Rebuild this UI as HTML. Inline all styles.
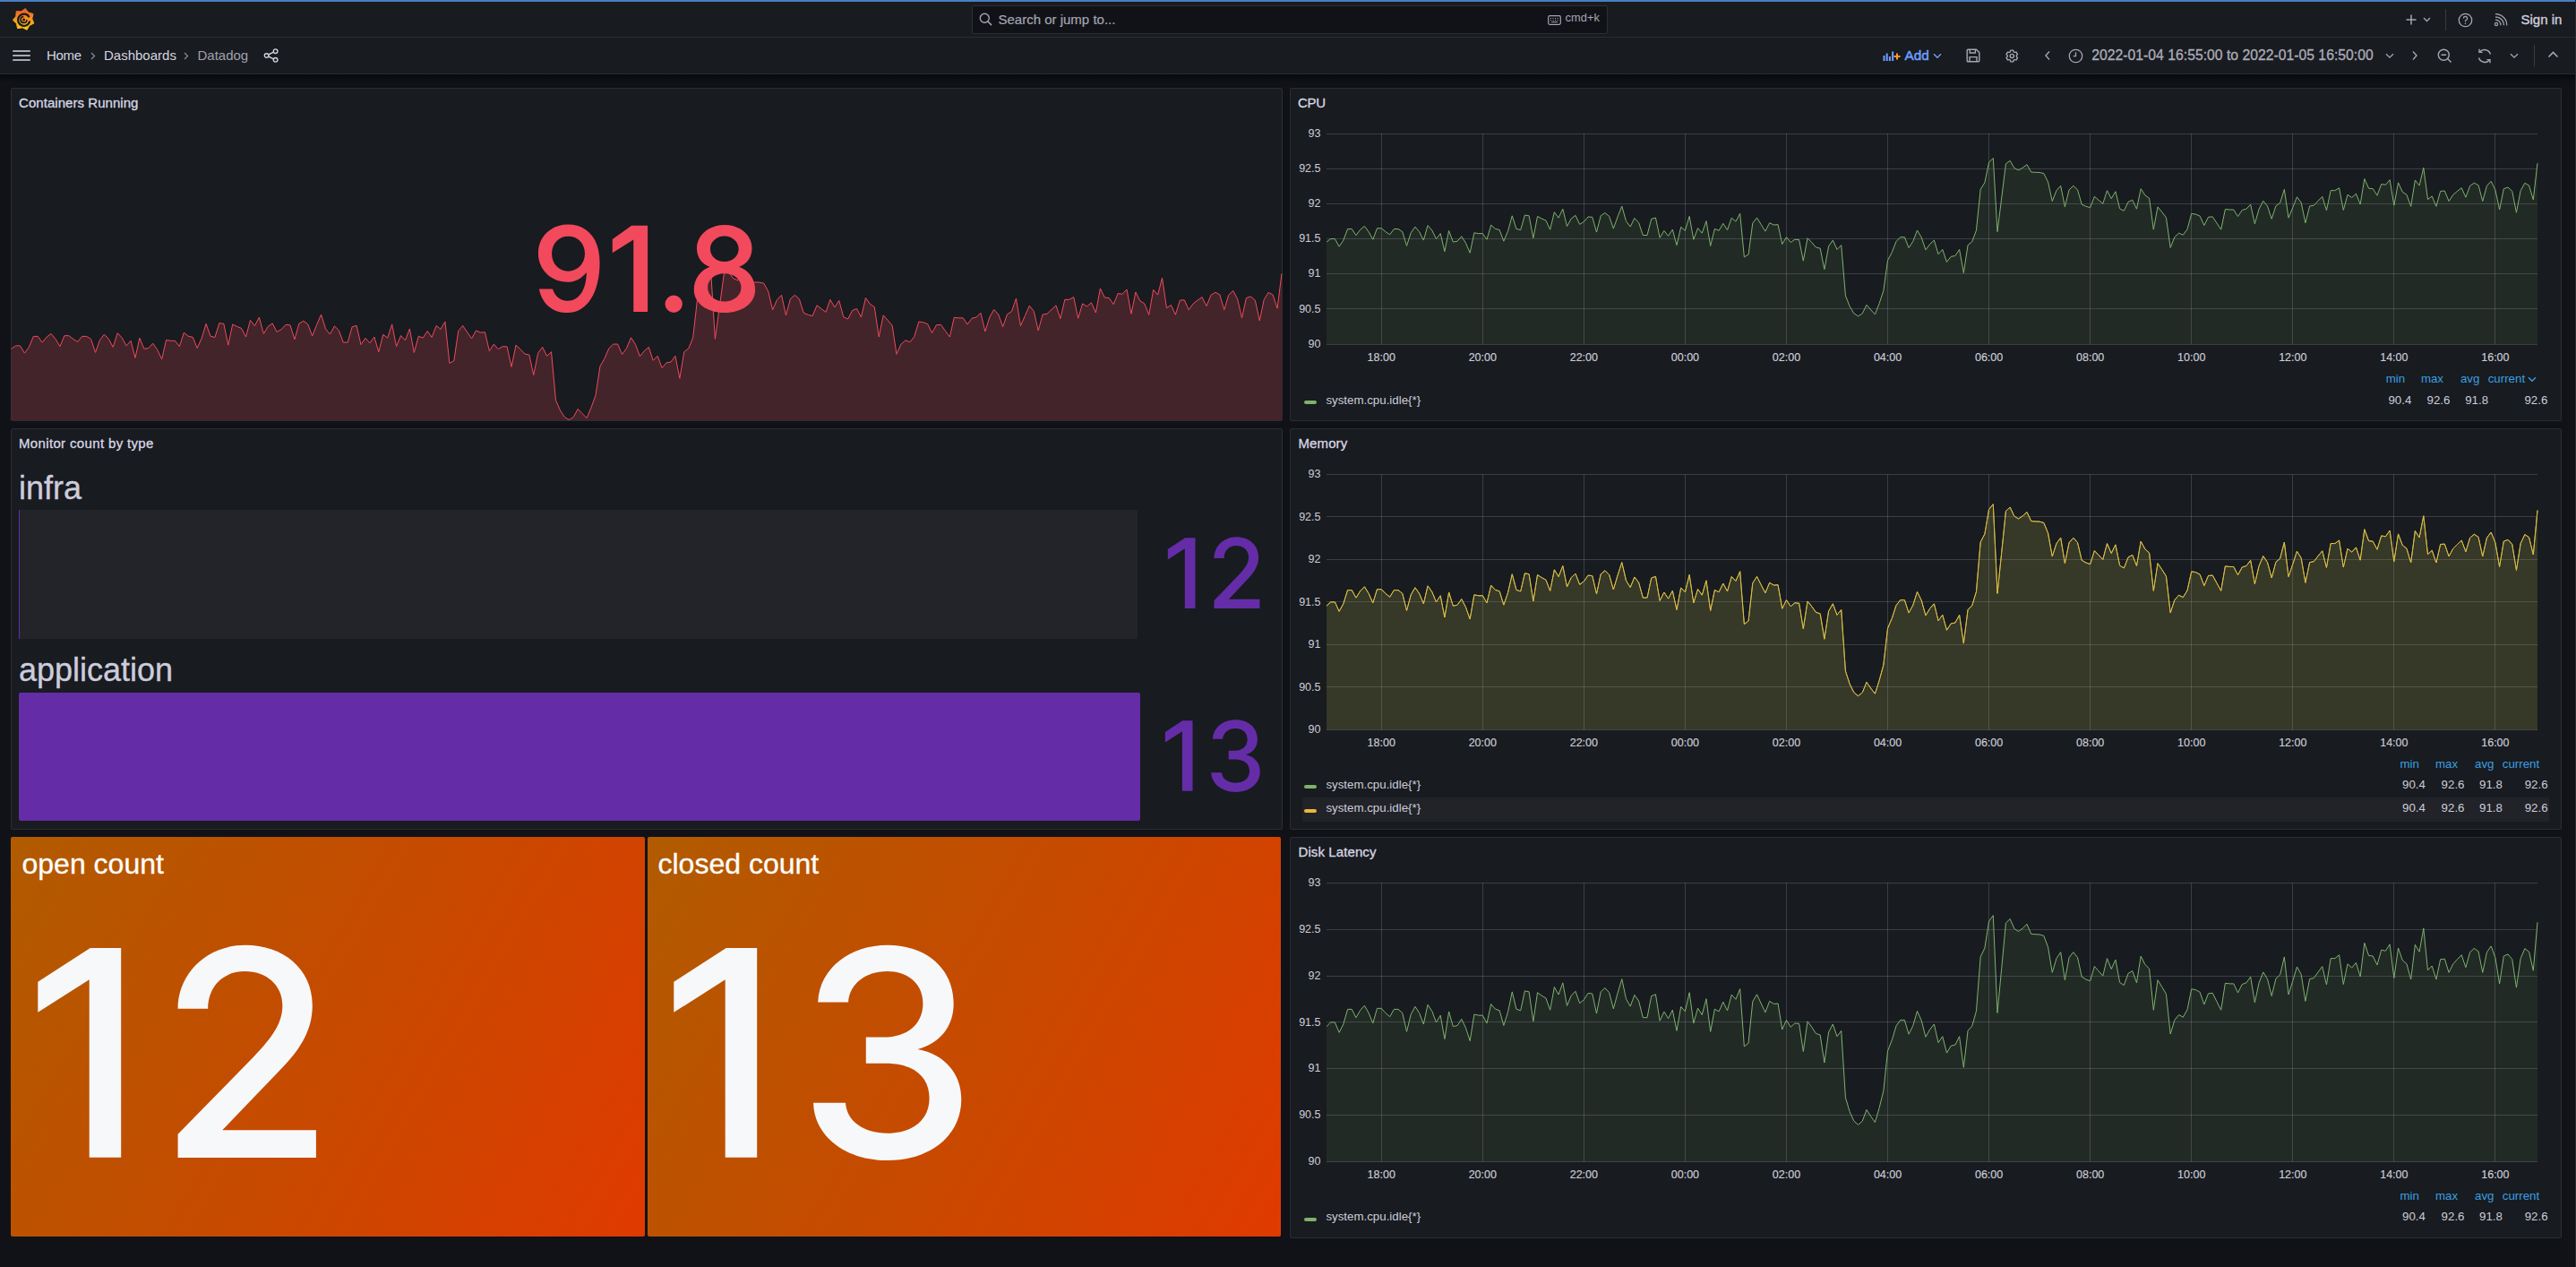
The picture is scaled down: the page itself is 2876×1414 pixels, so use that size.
<!DOCTYPE html>
<html><head><meta charset="utf-8"><style>
html,body{margin:0;padding:0;width:2876px;height:1414px;overflow:hidden;background:#111217;font-family:"Liberation Sans", sans-serif;}
.a{position:absolute;}
.t{position:absolute;line-height:1;white-space:nowrap;font-family:"Liberation Sans", sans-serif;}
</style></head><body>
<div class="a" style="left:0px;top:0px;width:2876px;height:41px;background:#181b1f;"></div>
<div class="a" style="left:0px;top:0px;width:2876px;height:2px;background:#4a7fc0;"></div>
<div class="a" style="left:0px;top:41px;width:2876px;height:1px;background:#2a2c31;"></div>
<div class="a" style="left:0px;top:42px;width:2876px;height:40px;background:#181b1f;"></div>
<div class="a" style="left:0px;top:82px;width:2876px;height:1px;background:#2a2c31;"></div>
<div class="a" style="left:0px;top:83px;width:2876px;height:9px;background:linear-gradient(#08090c,rgba(17,18,23,0));"></div>
<svg class="a" style="left:13px;top:9px" width="27" height="26" viewBox="0 0 27 26">
<defs><linearGradient id="lg" x1="0" y1="0" x2="0" y2="1"><stop offset="0" stop-color="#f05a28"/><stop offset="0.5" stop-color="#f7931e"/><stop offset="1" stop-color="#fbca0a"/></linearGradient></defs>
<path fill="url(#lg)" stroke="url(#lg)" stroke-width="1" stroke-linejoin="round" d="M15.32,0.54 L18.74,4.92 L24.07,6.50 L22.77,11.91 L24.85,17.06 L19.82,19.42 L17.09,24.26 L12.11,21.80 L6.62,22.68 L5.44,17.25 L1.33,13.51 L4.84,9.20 L5.21,3.65 L10.76,3.71 Z"/>
<path fill="none" stroke="#181b1f" stroke-width="2.2" d="M19.6 10.2 A6.6 6.6 0 1 0 20.2 14.5"/>
<path fill="none" stroke="#181b1f" stroke-width="1.6" d="M13.3 9.6 A3.4 3.4 0 1 0 16.9 12.9"/>
<circle cx="13.6" cy="13" r="1.5" fill="#181b1f"/>
</svg>
<div class="a" style="left:1085px;top:6px;width:710px;height:32px;background:#111217;border:1px solid #2d2f35;border-radius:2px;box-sizing:border-box;"></div>
<svg class="a" style="left:1093px;top:14px" width="15" height="15" viewBox="0 0 15 15"><circle cx="6.3" cy="6.3" r="5" fill="none" stroke="#a5a5b3" stroke-width="1.4"/><path d="M10 10 L13.6 13.6" stroke="#a5a5b3" stroke-width="1.5" stroke-linecap="round"/></svg>
<div class="t" style="left:1114.50px;top:14.20px;font-size:15px;color:#a5a5b3;-webkit-text-stroke:0.2px #a5a5b3;">Search or jump to...</div>
<svg class="a" style="left:1727.5px;top:16.5px" width="15" height="11" viewBox="0 0 15 11"><rect x="0.7" y="0.7" width="13.6" height="9.6" rx="1.5" fill="none" stroke="#a5a5b3" stroke-width="1.2"/><path d="M3 3.5h1M5.5 3.5h1M8 3.5h1M10.5 3.5h1M3 5.5h1M5.5 5.5h1M8 5.5h1M10.5 5.5h1M4 7.6h7" stroke="#a5a5b3" stroke-width="1"/></svg>
<div class="t" style="left:1747.50px;top:14.36px;font-size:12.8px;color:#a5a5b3;letter-spacing:0.1px;">cmd+k</div>
<svg class="a" style="left:2685px;top:15px" width="14" height="14" viewBox="0 0 14 14"><path d="M7 1.5v11M1.5 7h11" stroke="#a5a5b3" stroke-width="1.5"/></svg>
<svg class="a" style="left:2705px;top:19px" width="9" height="6" viewBox="0 0 9 6"><path d="M1 1l3.5 3.5L8 1" fill="none" stroke="#a5a5b3" stroke-width="1.3"/></svg>
<div class="a" style="left:2730px;top:10px;width:1px;height:24px;background:#3a3c42;"></div>
<svg class="a" style="left:2744px;top:14px" width="17" height="17" viewBox="0 0 17 17"><circle cx="8.5" cy="8.5" r="7.2" fill="none" stroke="#a5a5b3" stroke-width="1.3"/><path d="M6.4 6.6a2.1 2.1 0 1 1 2.9 1.9c-.6.3-.8.7-.8 1.3v.5" fill="none" stroke="#a5a5b3" stroke-width="1.3"/><circle cx="8.5" cy="12.3" r=".8" fill="#a5a5b3"/></svg>
<svg class="a" style="left:2784px;top:15px" width="16" height="15" viewBox="0 0 16 15"><circle cx="3" cy="12" r="1.6" fill="none" stroke="#a5a5b3" stroke-width="1.2"/><path d="M2 7.2a5.8 5.8 0 0 1 6 6M2 3.8a9.3 9.3 0 0 1 9.5 9.5M2 .6a12.6 12.6 0 0 1 12.8 12.8" fill="none" stroke="#a5a5b3" stroke-width="1.2"/></svg>
<div class="t" style="left:2814.50px;top:14.10px;font-size:15px;color:#ccccdc;-webkit-text-stroke:0.4px #ccccdc;">Sign in</div>
<svg class="a" style="left:14px;top:55px" width="20" height="14" viewBox="0 0 20 14"><path d="M0.2 2h19.6M0.2 7h19.6M0.2 12h19.6" stroke="#d8d8e6" stroke-width="1.6"/></svg>
<div class="t" style="left:52.00px;top:54.30px;font-size:15px;color:#d4d4e0;letter-spacing:-0.3px;">Home</div>
<svg class="a" style="left:101px;top:58px" width="6" height="9" viewBox="0 0 6 9"><path d="M1 1l3.5 3.5L1 8" fill="none" stroke="#8e8e9b" stroke-width="1.2"/></svg>
<div class="t" style="left:116.00px;top:54.30px;font-size:15px;color:#d4d4e0;">Dashboards</div>
<svg class="a" style="left:205px;top:58px" width="6" height="9" viewBox="0 0 6 9"><path d="M1 1l3.5 3.5L1 8" fill="none" stroke="#8e8e9b" stroke-width="1.2"/></svg>
<div class="t" style="left:220.50px;top:54.30px;font-size:15px;color:#a0a0ad;">Datadog</div>
<svg class="a" style="left:294px;top:54px" width="18" height="16" viewBox="0 0 18 16"><circle cx="13.6" cy="3.2" r="2.3" fill="none" stroke="#d0d0dc" stroke-width="1.4"/><circle cx="3.6" cy="8" r="2.3" fill="none" stroke="#d0d0dc" stroke-width="1.4"/><circle cx="13.6" cy="12.8" r="2.3" fill="none" stroke="#d0d0dc" stroke-width="1.4"/><path d="M5.7 7l5.8-2.8M5.7 9l5.8 2.8" stroke="#d0d0dc" stroke-width="1.4"/></svg>
<svg class="a" style="left:2102px;top:55px" width="21" height="14" viewBox="0 0 21 14"><path d="M1.5 13V7M4.7 13V4.5M7.9 13V8M11.1 13V2.5" stroke="#6e9fff" stroke-width="2"/><path d="M16 4.5v7M12.5 8h7" stroke="#ff9830" stroke-width="2"/></svg>
<div class="t" style="left:2126.50px;top:53.95px;font-size:15.3px;color:#6e9fff;-webkit-text-stroke:0.5px #6e9fff;">Add</div>
<svg class="a" style="left:2158px;top:59px" width="10" height="7" viewBox="0 0 10 7"><path d="M1 1.2l4 4 4-4" fill="none" stroke="#6e9fff" stroke-width="1.4"/></svg>
<svg class="a" style="left:2195px;top:54px" width="16" height="16" viewBox="0 0 16 16"><path d="M1.2 2.2a1 1 0 0 1 1-1h9.3l3.3 3.3v9.3a1 1 0 0 1-1 1H2.2a1 1 0 0 1-1-1z" fill="none" stroke="#a5a5b3" stroke-width="1.4"/><path d="M4.2 1.4v3.6h6.2V1.4M4 14.6V9.6h8v5" fill="none" stroke="#a5a5b3" stroke-width="1.4"/></svg>
<svg class="a" style="left:2238px;top:54px" width="17" height="17" viewBox="0 0 24 24"><path fill="#a5a5b3" d="M19.9 12.66a1 1 0 0 1 0-1.32l1.28-1.44a1 1 0 0 0 .12-1.17l-2-3.46a1 1 0 0 0-1.07-.48l-1.88.38a1 1 0 0 1-1.15-.66l-.61-1.83a1 1 0 0 0-.95-.68h-4a1 1 0 0 0-1 .68l-.56 1.83a1 1 0 0 1-1.15.66L5 4.79a1 1 0 0 0-1 .48L2 8.73a1 1 0 0 0 .1 1.17l1.27 1.44a1 1 0 0 1 0 1.32L2.1 14.1a1 1 0 0 0-.1 1.17l2 3.46a1 1 0 0 0 1.07.48l1.88-.38a1 1 0 0 1 1.15.66l.61 1.83a1 1 0 0 0 1 .68h4a1 1 0 0 0 .95-.68l.61-1.83a1 1 0 0 1 1.15-.66l1.88.38a1 1 0 0 0 1.07-.48l2-3.46a1 1 0 0 0-.12-1.17ZM18.41 14l.8.9-1.28 2.22-1.18-.24a3 3 0 0 0-3.45 2L12.92 20h-2.56L10 18.86a3 3 0 0 0-3.45-2l-1.18.24-1.3-2.21.8-.9a3 3 0 0 0 0-4l-.8-.9 1.28-2.2 1.18.24a3 3 0 0 0 3.45-2L10.36 4h2.56l.38 1.14a3 3 0 0 0 3.45 2l1.18-.24 1.28 2.22-.8.9a3 3 0 0 0 0 3.98Zm-6.77-6a4 4 0 1 0 4 4 4 4 0 0 0-4-4Zm0 6a2 2 0 1 1 2-2 2 2 0 0 1-2 2Z"/></svg>
<svg class="a" style="left:2282px;top:56px" width="8" height="12" viewBox="0 0 8 12"><path d="M6 1.5L2 6l4 4.5" fill="none" stroke="#a5a5b3" stroke-width="1.4"/></svg>
<svg class="a" style="left:2309px;top:54px" width="17" height="17" viewBox="0 0 17 17"><circle cx="8.5" cy="8.5" r="7.2" fill="none" stroke="#a5a5b3" stroke-width="1.3"/><path d="M8.5 4.3v4.4H5.8" fill="none" stroke="#a5a5b3" stroke-width="1.3"/></svg>
<div class="t" style="left:2335.30px;top:53.96px;font-size:15.75px;color:#acacba;-webkit-text-stroke:0.3px #acacba;">2022-01-04 16:55:00 to 2022-01-05 16:50:00</div>
<svg class="a" style="left:2663px;top:59px" width="10" height="7" viewBox="0 0 10 7"><path d="M1 1.2l4 4 4-4" fill="none" stroke="#a5a5b3" stroke-width="1.3"/></svg>
<svg class="a" style="left:2692px;top:56px" width="8" height="12" viewBox="0 0 8 12"><path d="M2 1.5L6 6l-4 4.5" fill="none" stroke="#a5a5b3" stroke-width="1.4"/></svg>
<svg class="a" style="left:2721px;top:54px" width="17" height="17" viewBox="0 0 17 17"><circle cx="7.3" cy="7.3" r="6" fill="none" stroke="#a5a5b3" stroke-width="1.4"/><path d="M4.5 7.3h5.6M11.6 11.6l4 4" stroke="#a5a5b3" stroke-width="1.4"/></svg>
<svg class="a" style="left:2765px;top:54px" width="18" height="17" viewBox="0 0 18 17"><path d="M15.5 6.5A7 7 0 0 0 3.5 4M2.5 10.5A7 7 0 0 0 14.5 13" fill="none" stroke="#a5a5b3" stroke-width="1.4"/><path d="M3 0.8v3.6h3.6M15 16.2v-3.6h-3.6" fill="none" stroke="#a5a5b3" stroke-width="1.4"/></svg>
<svg class="a" style="left:2802px;top:59px" width="10" height="7" viewBox="0 0 10 7"><path d="M1 1.2l4 4 4-4" fill="none" stroke="#a5a5b3" stroke-width="1.3"/></svg>
<div class="a" style="left:2829px;top:50px;width:1px;height:24px;background:#3a3c42;"></div>
<svg class="a" style="left:2844px;top:56px" width="13" height="9" viewBox="0 0 13 9"><path d="M1.5 7.5l5-5 5 5" fill="none" stroke="#a5a5b3" stroke-width="1.6"/></svg>
<div class="a" style="left:2875px;top:0px;width:1px;height:1414px;background:#2a2c31;"></div>
<div class="a" style="left:12px;top:98px;width:1420px;height:372px;background:#181b1f;border:1px solid #2b2d32;box-sizing:border-box;border-radius:2px;"></div>
<div class="a" style="left:1440px;top:98px;width:1420px;height:372px;background:#181b1f;border:1px solid #2b2d32;box-sizing:border-box;border-radius:2px;"></div>
<div class="a" style="left:12px;top:478px;width:1420px;height:448px;background:#181b1f;border:1px solid #2b2d32;box-sizing:border-box;border-radius:2px;"></div>
<div class="a" style="left:1440px;top:478px;width:1420px;height:448px;background:#181b1f;border:1px solid #2b2d32;box-sizing:border-box;border-radius:2px;"></div>
<div class="a" style="left:12px;top:934px;width:1420px;height:447px;background:#111217;box-sizing:border-box;border-radius:2px;"></div>
<div class="a" style="left:1440px;top:934px;width:1420px;height:448px;background:#181b1f;border:1px solid #2b2d32;box-sizing:border-box;border-radius:2px;"></div>
<div class="t" style="left:21.00px;top:107.20px;font-size:15px;color:#d8d8e6;-webkit-text-stroke:0.3px #d8d8e6;letter-spacing:0.05px;">Containers Running</div>
<div class="t" style="left:1449.00px;top:107.20px;font-size:15px;color:#d8d8e6;-webkit-text-stroke:0.3px #d8d8e6;letter-spacing:-0.3px;">CPU</div>
<div class="t" style="left:21.00px;top:487.20px;font-size:15px;color:#d8d8e6;-webkit-text-stroke:0.3px #d8d8e6;letter-spacing:0.35px;">Monitor count by type</div>
<div class="t" style="left:1449.50px;top:487.20px;font-size:15px;color:#d8d8e6;-webkit-text-stroke:0.3px #d8d8e6;letter-spacing:0.1px;">Memory</div>
<div class="t" style="left:1449.50px;top:943.20px;font-size:15px;color:#d8d8e6;-webkit-text-stroke:0.3px #d8d8e6;letter-spacing:0.1px;">Disk Latency</div>
<svg class="a" style="left:0;top:0" width="2876" height="1414"><path d="M1481.0 149.5H2833.0" stroke="rgba(204,204,220,0.2)" stroke-width="1"/><path d="M1481.0 188.5H2833.0" stroke="rgba(204,204,220,0.2)" stroke-width="1"/><path d="M1481.0 227.5H2833.0" stroke="rgba(204,204,220,0.2)" stroke-width="1"/><path d="M1481.0 266.5H2833.0" stroke="rgba(204,204,220,0.2)" stroke-width="1"/><path d="M1481.0 305.5H2833.0" stroke="rgba(204,204,220,0.2)" stroke-width="1"/><path d="M1481.0 344.5H2833.0" stroke="rgba(204,204,220,0.2)" stroke-width="1"/><path d="M1481.0 384.5H2833.0" stroke="rgba(204,204,220,0.2)" stroke-width="1"/><path d="M1542.5 149V384" stroke="rgba(204,204,220,0.2)" stroke-width="1"/><path d="M1655.5 149V384" stroke="rgba(204,204,220,0.2)" stroke-width="1"/><path d="M1768.5 149V384" stroke="rgba(204,204,220,0.2)" stroke-width="1"/><path d="M1881.5 149V384" stroke="rgba(204,204,220,0.2)" stroke-width="1"/><path d="M1994.5 149V384" stroke="rgba(204,204,220,0.2)" stroke-width="1"/><path d="M2107.5 149V384" stroke="rgba(204,204,220,0.2)" stroke-width="1"/><path d="M2220.5 149V384" stroke="rgba(204,204,220,0.2)" stroke-width="1"/><path d="M2333.5 149V384" stroke="rgba(204,204,220,0.2)" stroke-width="1"/><path d="M2446.5 149V384" stroke="rgba(204,204,220,0.2)" stroke-width="1"/><path d="M2559.5 149V384" stroke="rgba(204,204,220,0.2)" stroke-width="1"/><path d="M2672.5 149V384" stroke="rgba(204,204,220,0.2)" stroke-width="1"/><path d="M2785.5 149V384" stroke="rgba(204,204,220,0.2)" stroke-width="1"/><path d="M1481.0,384 L1481.00,270.03 1485.71,266.50 1490.42,266.50 1495.13,275.12 1499.84,268.07 1504.55,255.53 1509.26,255.53 1513.98,262.58 1518.69,256.32 1523.40,252.40 1528.11,258.67 1532.82,267.28 1537.53,254.75 1542.24,254.75 1546.95,258.67 1551.66,261.80 1556.37,255.53 1561.08,255.53 1565.79,258.67 1570.51,274.33 1575.22,259.84 1579.93,253.18 1584.64,258.67 1589.35,268.07 1594.06,251.62 1598.77,257.10 1603.48,266.50 1608.19,260.62 1612.90,280.60 1617.61,257.49 1622.32,270.03 1627.03,269.24 1631.75,263.76 1636.46,271.20 1641.17,282.17 1645.88,259.84 1650.59,260.62 1655.30,260.62 1660.01,267.28 1664.72,251.15 1669.43,255.38 1674.14,256.47 1678.85,269.16 1683.56,257.80 1688.28,240.81 1692.99,255.38 1697.70,256.63 1702.41,240.02 1707.12,240.81 1711.83,265.72 1716.54,241.43 1721.25,244.02 1725.96,246.13 1730.67,256.16 1735.38,236.73 1740.09,243.16 1744.80,233.21 1749.52,252.56 1754.23,244.02 1758.94,240.34 1763.65,250.36 1768.36,247.47 1773.07,241.90 1777.78,242.37 1782.49,259.06 1787.20,240.81 1791.91,237.52 1796.62,241.43 1801.33,255.06 1806.05,241.90 1810.76,230.00 1815.47,246.68 1820.18,253.03 1824.89,243.47 1829.60,248.56 1834.31,262.50 1839.02,262.50 1843.73,244.33 1848.44,243.00 1853.15,265.25 1857.86,257.49 1862.57,263.37 1867.29,256.16 1872.00,273.63 1876.71,253.34 1881.42,257.33 1886.13,241.43 1890.84,267.28 1895.55,254.59 1900.26,260.15 1904.97,246.68 1909.68,274.41 1914.39,255.38 1919.10,257.33 1923.82,249.35 1928.53,256.63 1933.24,243.16 1937.95,247.15 1942.66,238.30 1947.37,286.87 1952.08,283.97 1956.79,249.03 1961.50,243.00 1966.21,250.68 1970.92,258.12 1975.63,248.72 1980.34,250.99 1985.06,250.68 1989.77,272.53 1994.48,264.62 1999.19,270.50 2003.90,267.28 2008.61,267.60 2013.32,291.10 2018.03,265.72 2022.74,270.50 2027.45,275.98 2032.16,277.15 2036.87,300.58 2041.59,274.88 2046.30,268.07 2051.01,278.41 2055.72,273.63 2060.43,329.95 2065.14,341.86 2069.85,349.77 2074.56,352.90 2079.27,349.77 2083.98,340.21 2088.69,345.77 2093.40,350.86 2098.11,338.65 2102.83,324.39 2107.54,290.63 2112.25,281.54 2116.96,269.63 2121.67,264.62 2126.38,264.62 2131.09,276.53 2135.80,269.32 2140.51,257.02 2145.22,264.93 2149.93,278.88 2154.64,272.53 2159.36,268.07 2164.07,283.65 2168.78,278.41 2173.49,292.35 2178.20,286.32 2182.91,285.53 2187.62,278.41 2192.33,304.57 2197.04,273.63 2201.75,269.63 2206.46,257.02 2211.17,211.35 2215.89,203.83 2220.60,181.20 2225.31,176.42 2230.02,258.59 2234.73,220.83 2239.44,182.76 2244.15,179.32 2248.86,187.54 2253.57,189.89 2258.28,187.23 2262.99,183.70 2267.70,192.01 2272.41,192.32 2277.13,192.48 2281.84,193.57 2286.55,203.05 2291.26,224.51 2295.97,212.61 2300.68,207.36 2305.39,230.86 2310.10,211.82 2314.81,207.36 2319.52,211.82 2324.23,228.12 2328.94,230.31 2333.66,231.64 2338.37,219.27 2343.08,223.34 2347.79,227.33 2352.50,212.61 2357.21,221.62 2361.92,213.70 2366.63,232.89 2371.34,235.24 2376.05,225.30 2380.76,223.18 2385.47,233.21 2390.18,210.65 2394.90,217.86 2399.61,221.30 2404.32,256.16 2409.03,230.86 2413.74,236.65 2418.45,242.69 2423.16,276.37 2427.87,264.62 2432.58,260.15 2437.29,262.19 2442.00,255.85 2446.71,238.46 2451.43,239.08 2456.14,241.12 2460.85,251.46 2465.56,242.22 2470.27,241.90 2474.98,249.03 2479.69,256.16 2484.40,233.52 2489.11,233.99 2493.82,233.99 2498.53,241.59 2503.24,234.46 2507.95,233.21 2512.67,228.12 2517.38,249.82 2522.09,233.21 2526.80,224.20 2531.51,230.00 2536.22,244.33 2540.93,229.68 2545.64,226.39 2550.35,211.35 2555.06,243.16 2559.77,231.64 2564.48,219.74 2569.20,226.08 2573.91,248.72 2578.62,230.00 2583.33,229.21 2588.04,224.20 2592.75,219.42 2597.46,234.77 2602.17,212.61 2606.88,212.61 2611.59,209.71 2616.30,234.46 2621.01,217.31 2625.72,220.52 2630.44,216.21 2635.15,227.96 2639.86,199.60 2644.57,210.18 2649.28,210.65 2653.99,218.17 2658.70,205.48 2663.41,206.26 2668.12,200.70 2672.83,229.21 2677.54,203.83 2682.25,214.17 2686.97,217.31 2691.68,230.31 2696.39,201.01 2701.10,207.04 2705.81,187.23 2710.52,222.55 2715.23,218.95 2719.94,230.31 2724.65,213.39 2729.36,213.08 2734.07,224.51 2738.78,217.31 2743.49,213.39 2748.21,209.71 2752.92,220.21 2757.63,207.36 2762.34,204.15 2767.05,206.73 2771.76,224.51 2776.47,207.36 2781.18,202.27 2785.89,211.82 2790.60,233.99 2795.31,210.65 2800.02,209.08 2804.74,213.39 2809.45,237.20 2814.16,212.61 2818.87,204.30 2823.58,207.04 2828.29,222.87 2833.00,182.14 L2833.0,384 Z" fill="rgba(126,178,109,0.1)" /><polyline points="1481.00,270.03 1485.71,266.50 1490.42,266.50 1495.13,275.12 1499.84,268.07 1504.55,255.53 1509.26,255.53 1513.98,262.58 1518.69,256.32 1523.40,252.40 1528.11,258.67 1532.82,267.28 1537.53,254.75 1542.24,254.75 1546.95,258.67 1551.66,261.80 1556.37,255.53 1561.08,255.53 1565.79,258.67 1570.51,274.33 1575.22,259.84 1579.93,253.18 1584.64,258.67 1589.35,268.07 1594.06,251.62 1598.77,257.10 1603.48,266.50 1608.19,260.62 1612.90,280.60 1617.61,257.49 1622.32,270.03 1627.03,269.24 1631.75,263.76 1636.46,271.20 1641.17,282.17 1645.88,259.84 1650.59,260.62 1655.30,260.62 1660.01,267.28 1664.72,251.15 1669.43,255.38 1674.14,256.47 1678.85,269.16 1683.56,257.80 1688.28,240.81 1692.99,255.38 1697.70,256.63 1702.41,240.02 1707.12,240.81 1711.83,265.72 1716.54,241.43 1721.25,244.02 1725.96,246.13 1730.67,256.16 1735.38,236.73 1740.09,243.16 1744.80,233.21 1749.52,252.56 1754.23,244.02 1758.94,240.34 1763.65,250.36 1768.36,247.47 1773.07,241.90 1777.78,242.37 1782.49,259.06 1787.20,240.81 1791.91,237.52 1796.62,241.43 1801.33,255.06 1806.05,241.90 1810.76,230.00 1815.47,246.68 1820.18,253.03 1824.89,243.47 1829.60,248.56 1834.31,262.50 1839.02,262.50 1843.73,244.33 1848.44,243.00 1853.15,265.25 1857.86,257.49 1862.57,263.37 1867.29,256.16 1872.00,273.63 1876.71,253.34 1881.42,257.33 1886.13,241.43 1890.84,267.28 1895.55,254.59 1900.26,260.15 1904.97,246.68 1909.68,274.41 1914.39,255.38 1919.10,257.33 1923.82,249.35 1928.53,256.63 1933.24,243.16 1937.95,247.15 1942.66,238.30 1947.37,286.87 1952.08,283.97 1956.79,249.03 1961.50,243.00 1966.21,250.68 1970.92,258.12 1975.63,248.72 1980.34,250.99 1985.06,250.68 1989.77,272.53 1994.48,264.62 1999.19,270.50 2003.90,267.28 2008.61,267.60 2013.32,291.10 2018.03,265.72 2022.74,270.50 2027.45,275.98 2032.16,277.15 2036.87,300.58 2041.59,274.88 2046.30,268.07 2051.01,278.41 2055.72,273.63 2060.43,329.95 2065.14,341.86 2069.85,349.77 2074.56,352.90 2079.27,349.77 2083.98,340.21 2088.69,345.77 2093.40,350.86 2098.11,338.65 2102.83,324.39 2107.54,290.63 2112.25,281.54 2116.96,269.63 2121.67,264.62 2126.38,264.62 2131.09,276.53 2135.80,269.32 2140.51,257.02 2145.22,264.93 2149.93,278.88 2154.64,272.53 2159.36,268.07 2164.07,283.65 2168.78,278.41 2173.49,292.35 2178.20,286.32 2182.91,285.53 2187.62,278.41 2192.33,304.57 2197.04,273.63 2201.75,269.63 2206.46,257.02 2211.17,211.35 2215.89,203.83 2220.60,181.20 2225.31,176.42 2230.02,258.59 2234.73,220.83 2239.44,182.76 2244.15,179.32 2248.86,187.54 2253.57,189.89 2258.28,187.23 2262.99,183.70 2267.70,192.01 2272.41,192.32 2277.13,192.48 2281.84,193.57 2286.55,203.05 2291.26,224.51 2295.97,212.61 2300.68,207.36 2305.39,230.86 2310.10,211.82 2314.81,207.36 2319.52,211.82 2324.23,228.12 2328.94,230.31 2333.66,231.64 2338.37,219.27 2343.08,223.34 2347.79,227.33 2352.50,212.61 2357.21,221.62 2361.92,213.70 2366.63,232.89 2371.34,235.24 2376.05,225.30 2380.76,223.18 2385.47,233.21 2390.18,210.65 2394.90,217.86 2399.61,221.30 2404.32,256.16 2409.03,230.86 2413.74,236.65 2418.45,242.69 2423.16,276.37 2427.87,264.62 2432.58,260.15 2437.29,262.19 2442.00,255.85 2446.71,238.46 2451.43,239.08 2456.14,241.12 2460.85,251.46 2465.56,242.22 2470.27,241.90 2474.98,249.03 2479.69,256.16 2484.40,233.52 2489.11,233.99 2493.82,233.99 2498.53,241.59 2503.24,234.46 2507.95,233.21 2512.67,228.12 2517.38,249.82 2522.09,233.21 2526.80,224.20 2531.51,230.00 2536.22,244.33 2540.93,229.68 2545.64,226.39 2550.35,211.35 2555.06,243.16 2559.77,231.64 2564.48,219.74 2569.20,226.08 2573.91,248.72 2578.62,230.00 2583.33,229.21 2588.04,224.20 2592.75,219.42 2597.46,234.77 2602.17,212.61 2606.88,212.61 2611.59,209.71 2616.30,234.46 2621.01,217.31 2625.72,220.52 2630.44,216.21 2635.15,227.96 2639.86,199.60 2644.57,210.18 2649.28,210.65 2653.99,218.17 2658.70,205.48 2663.41,206.26 2668.12,200.70 2672.83,229.21 2677.54,203.83 2682.25,214.17 2686.97,217.31 2691.68,230.31 2696.39,201.01 2701.10,207.04 2705.81,187.23 2710.52,222.55 2715.23,218.95 2719.94,230.31 2724.65,213.39 2729.36,213.08 2734.07,224.51 2738.78,217.31 2743.49,213.39 2748.21,209.71 2752.92,220.21 2757.63,207.36 2762.34,204.15 2767.05,206.73 2771.76,224.51 2776.47,207.36 2781.18,202.27 2785.89,211.82 2790.60,233.99 2795.31,210.65 2800.02,209.08 2804.74,213.39 2809.45,237.20 2814.16,212.61 2818.87,204.30 2823.58,207.04 2828.29,222.87 2833.00,182.14" fill="none" stroke="#7eb26d" stroke-width="1" stroke-linejoin="round"/></svg>
<div class="t" style="right:1401.50px;top:142.72px;font-size:12.5px;color:#ccccdc;">93</div>
<div class="t" style="right:1401.50px;top:181.88px;font-size:12.5px;color:#ccccdc;">92.5</div>
<div class="t" style="right:1401.50px;top:221.05px;font-size:12.5px;color:#ccccdc;">92</div>
<div class="t" style="right:1401.50px;top:260.22px;font-size:12.5px;color:#ccccdc;">91.5</div>
<div class="t" style="right:1401.50px;top:299.38px;font-size:12.5px;color:#ccccdc;">91</div>
<div class="t" style="right:1401.50px;top:338.55px;font-size:12.5px;color:#ccccdc;">90.5</div>
<div class="t" style="right:1401.50px;top:377.72px;font-size:12.5px;color:#ccccdc;">90</div>
<div class="t" style="left:1242.24px;width:600px;text-align:center;top:392.82px;font-size:12.5px;color:#ccccdc;-webkit-text-stroke:0.15px #ccccdc;">18:00</div>
<div class="t" style="left:1355.30px;width:600px;text-align:center;top:392.82px;font-size:12.5px;color:#ccccdc;-webkit-text-stroke:0.15px #ccccdc;">20:00</div>
<div class="t" style="left:1468.36px;width:600px;text-align:center;top:392.82px;font-size:12.5px;color:#ccccdc;-webkit-text-stroke:0.15px #ccccdc;">22:00</div>
<div class="t" style="left:1581.42px;width:600px;text-align:center;top:392.82px;font-size:12.5px;color:#ccccdc;-webkit-text-stroke:0.15px #ccccdc;">00:00</div>
<div class="t" style="left:1694.48px;width:600px;text-align:center;top:392.82px;font-size:12.5px;color:#ccccdc;-webkit-text-stroke:0.15px #ccccdc;">02:00</div>
<div class="t" style="left:1807.54px;width:600px;text-align:center;top:392.82px;font-size:12.5px;color:#ccccdc;-webkit-text-stroke:0.15px #ccccdc;">04:00</div>
<div class="t" style="left:1920.60px;width:600px;text-align:center;top:392.82px;font-size:12.5px;color:#ccccdc;-webkit-text-stroke:0.15px #ccccdc;">06:00</div>
<div class="t" style="left:2033.66px;width:600px;text-align:center;top:392.82px;font-size:12.5px;color:#ccccdc;-webkit-text-stroke:0.15px #ccccdc;">08:00</div>
<div class="t" style="left:2146.71px;width:600px;text-align:center;top:392.82px;font-size:12.5px;color:#ccccdc;-webkit-text-stroke:0.15px #ccccdc;">10:00</div>
<div class="t" style="left:2259.77px;width:600px;text-align:center;top:392.82px;font-size:12.5px;color:#ccccdc;-webkit-text-stroke:0.15px #ccccdc;">12:00</div>
<div class="t" style="left:2372.83px;width:600px;text-align:center;top:392.82px;font-size:12.5px;color:#ccccdc;-webkit-text-stroke:0.15px #ccccdc;">14:00</div>
<div class="t" style="left:2485.89px;width:600px;text-align:center;top:392.82px;font-size:12.5px;color:#ccccdc;-webkit-text-stroke:0.15px #ccccdc;">16:00</div>
<svg class="a" style="left:0;top:0" width="2876" height="1414"><path d="M1481.0 529.5H2833.0" stroke="rgba(204,204,220,0.2)" stroke-width="1"/><path d="M1481.0 576.5H2833.0" stroke="rgba(204,204,220,0.2)" stroke-width="1"/><path d="M1481.0 624.5H2833.0" stroke="rgba(204,204,220,0.2)" stroke-width="1"/><path d="M1481.0 671.5H2833.0" stroke="rgba(204,204,220,0.2)" stroke-width="1"/><path d="M1481.0 719.5H2833.0" stroke="rgba(204,204,220,0.2)" stroke-width="1"/><path d="M1481.0 766.5H2833.0" stroke="rgba(204,204,220,0.2)" stroke-width="1"/><path d="M1481.0 814.5H2833.0" stroke="rgba(204,204,220,0.2)" stroke-width="1"/><path d="M1542.5 529.4V814.4" stroke="rgba(204,204,220,0.2)" stroke-width="1"/><path d="M1655.5 529.4V814.4" stroke="rgba(204,204,220,0.2)" stroke-width="1"/><path d="M1768.5 529.4V814.4" stroke="rgba(204,204,220,0.2)" stroke-width="1"/><path d="M1881.5 529.4V814.4" stroke="rgba(204,204,220,0.2)" stroke-width="1"/><path d="M1994.5 529.4V814.4" stroke="rgba(204,204,220,0.2)" stroke-width="1"/><path d="M2107.5 529.4V814.4" stroke="rgba(204,204,220,0.2)" stroke-width="1"/><path d="M2220.5 529.4V814.4" stroke="rgba(204,204,220,0.2)" stroke-width="1"/><path d="M2333.5 529.4V814.4" stroke="rgba(204,204,220,0.2)" stroke-width="1"/><path d="M2446.5 529.4V814.4" stroke="rgba(204,204,220,0.2)" stroke-width="1"/><path d="M2559.5 529.4V814.4" stroke="rgba(204,204,220,0.2)" stroke-width="1"/><path d="M2672.5 529.4V814.4" stroke="rgba(204,204,220,0.2)" stroke-width="1"/><path d="M2785.5 529.4V814.4" stroke="rgba(204,204,220,0.2)" stroke-width="1"/><path d="M1481.0,814.4 L1481.00,676.18 1485.71,671.90 1490.42,671.90 1495.13,682.35 1499.84,673.80 1504.55,658.60 1509.26,658.60 1513.98,667.15 1518.69,659.55 1523.40,654.80 1528.11,662.40 1532.82,672.85 1537.53,657.65 1542.24,657.65 1546.95,662.40 1551.66,666.20 1556.37,658.60 1561.08,658.60 1565.79,662.40 1570.51,681.40 1575.22,663.83 1579.93,655.75 1584.64,662.40 1589.35,673.80 1594.06,653.85 1598.77,660.50 1603.48,671.90 1608.19,664.77 1612.90,689.00 1617.61,660.98 1622.32,676.18 1627.03,675.22 1631.75,668.58 1636.46,677.60 1641.17,690.90 1645.88,663.83 1650.59,664.77 1655.30,664.77 1660.01,672.85 1664.72,653.28 1669.43,658.41 1674.14,659.74 1678.85,675.13 1683.56,661.35 1688.28,640.74 1692.99,658.41 1697.70,659.93 1702.41,639.79 1707.12,640.74 1711.83,670.95 1716.54,641.50 1721.25,644.63 1725.96,647.20 1730.67,659.36 1735.38,635.80 1740.09,643.59 1744.80,631.53 1749.52,654.99 1754.23,644.63 1758.94,640.17 1763.65,652.33 1768.36,648.82 1773.07,642.07 1777.78,642.64 1782.49,662.88 1787.20,640.74 1791.91,636.75 1796.62,641.50 1801.33,658.03 1806.05,642.07 1810.76,627.63 1815.47,647.87 1820.18,655.56 1824.89,643.97 1829.60,650.15 1834.31,667.05 1839.02,667.05 1843.73,645.01 1848.44,643.40 1853.15,670.38 1857.86,660.98 1862.57,668.10 1867.29,659.36 1872.00,680.54 1876.71,655.94 1881.42,660.78 1886.13,641.50 1890.84,672.85 1895.55,657.46 1900.26,664.20 1904.97,647.87 1909.68,681.49 1914.39,658.41 1919.10,660.78 1923.82,651.10 1928.53,659.93 1933.24,643.59 1937.95,648.43 1942.66,637.70 1947.37,696.60 1952.08,693.08 1956.79,650.72 1961.50,643.40 1966.21,652.71 1970.92,661.74 1975.63,650.33 1980.34,653.09 1985.06,652.71 1989.77,679.21 1994.48,669.62 1999.19,676.75 2003.90,672.85 2008.61,673.23 2013.32,701.73 2018.03,670.95 2022.74,676.75 2027.45,683.39 2032.16,684.82 2036.87,713.23 2041.59,682.06 2046.30,673.80 2051.01,686.34 2055.72,680.54 2060.43,748.85 2065.14,763.29 2069.85,772.89 2074.56,776.68 2079.27,772.89 2083.98,761.30 2088.69,768.04 2093.40,774.21 2098.11,759.40 2102.83,742.11 2107.54,701.16 2112.25,690.14 2116.96,675.70 2121.67,669.62 2126.38,669.62 2131.09,684.06 2135.80,675.32 2140.51,660.41 2145.22,670.00 2149.93,686.91 2154.64,679.21 2159.36,673.80 2164.07,692.70 2168.78,686.34 2173.49,703.25 2178.20,695.93 2182.91,694.98 2187.62,686.34 2192.33,718.07 2197.04,680.54 2201.75,675.70 2206.46,660.41 2211.17,605.02 2215.89,595.90 2220.60,568.45 2225.31,562.65 2230.02,662.31 2234.73,616.52 2239.44,570.34 2244.15,566.16 2248.86,576.14 2253.57,578.99 2258.28,575.76 2262.99,571.48 2267.70,581.56 2272.41,581.93 2277.13,582.13 2281.84,583.46 2286.55,594.95 2291.26,620.98 2295.97,606.54 2300.68,600.18 2305.39,628.68 2310.10,605.59 2314.81,600.18 2319.52,605.59 2324.23,625.35 2328.94,628.01 2333.66,629.63 2338.37,614.62 2343.08,619.55 2347.79,624.40 2352.50,606.54 2357.21,617.47 2361.92,607.87 2366.63,631.14 2371.34,633.99 2376.05,621.93 2380.76,619.37 2385.47,631.53 2390.18,604.17 2394.90,612.91 2399.61,617.09 2404.32,659.36 2409.03,628.68 2413.74,635.70 2418.45,643.02 2423.16,683.87 2427.87,669.62 2432.58,664.20 2437.29,666.67 2442.00,658.98 2446.71,637.89 2451.43,638.65 2456.14,641.12 2460.85,653.66 2465.56,642.45 2470.27,642.07 2474.98,650.72 2479.69,659.36 2484.40,631.90 2489.11,632.47 2493.82,632.47 2498.53,641.69 2503.24,633.04 2507.95,631.53 2512.67,625.35 2517.38,651.67 2522.09,631.53 2526.80,620.60 2531.51,627.63 2536.22,645.01 2540.93,627.25 2545.64,623.26 2550.35,605.02 2555.06,643.59 2559.77,629.63 2564.48,615.19 2569.20,622.88 2573.91,650.33 2578.62,627.63 2583.33,626.68 2588.04,620.60 2592.75,614.81 2597.46,633.42 2602.17,606.54 2606.88,606.54 2611.59,603.03 2616.30,633.04 2621.01,612.24 2625.72,616.13 2630.44,610.91 2635.15,625.16 2639.86,590.77 2644.57,603.60 2649.28,604.17 2653.99,613.28 2658.70,597.90 2663.41,598.84 2668.12,592.10 2672.83,626.68 2677.54,595.90 2682.25,608.44 2686.97,612.24 2691.68,628.01 2696.39,592.48 2701.10,599.79 2705.81,575.76 2710.52,618.60 2715.23,614.24 2719.94,628.01 2724.65,607.49 2729.36,607.11 2734.07,620.98 2738.78,612.24 2743.49,607.49 2748.21,603.03 2752.92,615.76 2757.63,600.18 2762.34,596.28 2767.05,599.41 2771.76,620.98 2776.47,600.18 2781.18,594.00 2785.89,605.59 2790.60,632.47 2795.31,604.17 2800.02,602.26 2804.74,607.49 2809.45,636.37 2814.16,606.54 2818.87,596.47 2823.58,599.79 2828.29,618.98 2833.00,569.59 L2833.0,814.4 Z" fill="rgba(126,178,109,0.1)" /><polyline points="1481.00,676.18 1485.71,671.90 1490.42,671.90 1495.13,682.35 1499.84,673.80 1504.55,658.60 1509.26,658.60 1513.98,667.15 1518.69,659.55 1523.40,654.80 1528.11,662.40 1532.82,672.85 1537.53,657.65 1542.24,657.65 1546.95,662.40 1551.66,666.20 1556.37,658.60 1561.08,658.60 1565.79,662.40 1570.51,681.40 1575.22,663.83 1579.93,655.75 1584.64,662.40 1589.35,673.80 1594.06,653.85 1598.77,660.50 1603.48,671.90 1608.19,664.77 1612.90,689.00 1617.61,660.98 1622.32,676.18 1627.03,675.22 1631.75,668.58 1636.46,677.60 1641.17,690.90 1645.88,663.83 1650.59,664.77 1655.30,664.77 1660.01,672.85 1664.72,653.28 1669.43,658.41 1674.14,659.74 1678.85,675.13 1683.56,661.35 1688.28,640.74 1692.99,658.41 1697.70,659.93 1702.41,639.79 1707.12,640.74 1711.83,670.95 1716.54,641.50 1721.25,644.63 1725.96,647.20 1730.67,659.36 1735.38,635.80 1740.09,643.59 1744.80,631.53 1749.52,654.99 1754.23,644.63 1758.94,640.17 1763.65,652.33 1768.36,648.82 1773.07,642.07 1777.78,642.64 1782.49,662.88 1787.20,640.74 1791.91,636.75 1796.62,641.50 1801.33,658.03 1806.05,642.07 1810.76,627.63 1815.47,647.87 1820.18,655.56 1824.89,643.97 1829.60,650.15 1834.31,667.05 1839.02,667.05 1843.73,645.01 1848.44,643.40 1853.15,670.38 1857.86,660.98 1862.57,668.10 1867.29,659.36 1872.00,680.54 1876.71,655.94 1881.42,660.78 1886.13,641.50 1890.84,672.85 1895.55,657.46 1900.26,664.20 1904.97,647.87 1909.68,681.49 1914.39,658.41 1919.10,660.78 1923.82,651.10 1928.53,659.93 1933.24,643.59 1937.95,648.43 1942.66,637.70 1947.37,696.60 1952.08,693.08 1956.79,650.72 1961.50,643.40 1966.21,652.71 1970.92,661.74 1975.63,650.33 1980.34,653.09 1985.06,652.71 1989.77,679.21 1994.48,669.62 1999.19,676.75 2003.90,672.85 2008.61,673.23 2013.32,701.73 2018.03,670.95 2022.74,676.75 2027.45,683.39 2032.16,684.82 2036.87,713.23 2041.59,682.06 2046.30,673.80 2051.01,686.34 2055.72,680.54 2060.43,748.85 2065.14,763.29 2069.85,772.89 2074.56,776.68 2079.27,772.89 2083.98,761.30 2088.69,768.04 2093.40,774.21 2098.11,759.40 2102.83,742.11 2107.54,701.16 2112.25,690.14 2116.96,675.70 2121.67,669.62 2126.38,669.62 2131.09,684.06 2135.80,675.32 2140.51,660.41 2145.22,670.00 2149.93,686.91 2154.64,679.21 2159.36,673.80 2164.07,692.70 2168.78,686.34 2173.49,703.25 2178.20,695.93 2182.91,694.98 2187.62,686.34 2192.33,718.07 2197.04,680.54 2201.75,675.70 2206.46,660.41 2211.17,605.02 2215.89,595.90 2220.60,568.45 2225.31,562.65 2230.02,662.31 2234.73,616.52 2239.44,570.34 2244.15,566.16 2248.86,576.14 2253.57,578.99 2258.28,575.76 2262.99,571.48 2267.70,581.56 2272.41,581.93 2277.13,582.13 2281.84,583.46 2286.55,594.95 2291.26,620.98 2295.97,606.54 2300.68,600.18 2305.39,628.68 2310.10,605.59 2314.81,600.18 2319.52,605.59 2324.23,625.35 2328.94,628.01 2333.66,629.63 2338.37,614.62 2343.08,619.55 2347.79,624.40 2352.50,606.54 2357.21,617.47 2361.92,607.87 2366.63,631.14 2371.34,633.99 2376.05,621.93 2380.76,619.37 2385.47,631.53 2390.18,604.17 2394.90,612.91 2399.61,617.09 2404.32,659.36 2409.03,628.68 2413.74,635.70 2418.45,643.02 2423.16,683.87 2427.87,669.62 2432.58,664.20 2437.29,666.67 2442.00,658.98 2446.71,637.89 2451.43,638.65 2456.14,641.12 2460.85,653.66 2465.56,642.45 2470.27,642.07 2474.98,650.72 2479.69,659.36 2484.40,631.90 2489.11,632.47 2493.82,632.47 2498.53,641.69 2503.24,633.04 2507.95,631.53 2512.67,625.35 2517.38,651.67 2522.09,631.53 2526.80,620.60 2531.51,627.63 2536.22,645.01 2540.93,627.25 2545.64,623.26 2550.35,605.02 2555.06,643.59 2559.77,629.63 2564.48,615.19 2569.20,622.88 2573.91,650.33 2578.62,627.63 2583.33,626.68 2588.04,620.60 2592.75,614.81 2597.46,633.42 2602.17,606.54 2606.88,606.54 2611.59,603.03 2616.30,633.04 2621.01,612.24 2625.72,616.13 2630.44,610.91 2635.15,625.16 2639.86,590.77 2644.57,603.60 2649.28,604.17 2653.99,613.28 2658.70,597.90 2663.41,598.84 2668.12,592.10 2672.83,626.68 2677.54,595.90 2682.25,608.44 2686.97,612.24 2691.68,628.01 2696.39,592.48 2701.10,599.79 2705.81,575.76 2710.52,618.60 2715.23,614.24 2719.94,628.01 2724.65,607.49 2729.36,607.11 2734.07,620.98 2738.78,612.24 2743.49,607.49 2748.21,603.03 2752.92,615.76 2757.63,600.18 2762.34,596.28 2767.05,599.41 2771.76,620.98 2776.47,600.18 2781.18,594.00 2785.89,605.59 2790.60,632.47 2795.31,604.17 2800.02,602.26 2804.74,607.49 2809.45,636.37 2814.16,606.54 2818.87,596.47 2823.58,599.79 2828.29,618.98 2833.00,569.59" fill="none" stroke="#7eb26d" stroke-width="1" stroke-linejoin="round"/><path d="M1481.0,814.4 L1481.00,676.18 1485.71,671.90 1490.42,671.90 1495.13,682.35 1499.84,673.80 1504.55,658.60 1509.26,658.60 1513.98,667.15 1518.69,659.55 1523.40,654.80 1528.11,662.40 1532.82,672.85 1537.53,657.65 1542.24,657.65 1546.95,662.40 1551.66,666.20 1556.37,658.60 1561.08,658.60 1565.79,662.40 1570.51,681.40 1575.22,663.83 1579.93,655.75 1584.64,662.40 1589.35,673.80 1594.06,653.85 1598.77,660.50 1603.48,671.90 1608.19,664.77 1612.90,689.00 1617.61,660.98 1622.32,676.18 1627.03,675.22 1631.75,668.58 1636.46,677.60 1641.17,690.90 1645.88,663.83 1650.59,664.77 1655.30,664.77 1660.01,672.85 1664.72,653.28 1669.43,658.41 1674.14,659.74 1678.85,675.13 1683.56,661.35 1688.28,640.74 1692.99,658.41 1697.70,659.93 1702.41,639.79 1707.12,640.74 1711.83,670.95 1716.54,641.50 1721.25,644.63 1725.96,647.20 1730.67,659.36 1735.38,635.80 1740.09,643.59 1744.80,631.53 1749.52,654.99 1754.23,644.63 1758.94,640.17 1763.65,652.33 1768.36,648.82 1773.07,642.07 1777.78,642.64 1782.49,662.88 1787.20,640.74 1791.91,636.75 1796.62,641.50 1801.33,658.03 1806.05,642.07 1810.76,627.63 1815.47,647.87 1820.18,655.56 1824.89,643.97 1829.60,650.15 1834.31,667.05 1839.02,667.05 1843.73,645.01 1848.44,643.40 1853.15,670.38 1857.86,660.98 1862.57,668.10 1867.29,659.36 1872.00,680.54 1876.71,655.94 1881.42,660.78 1886.13,641.50 1890.84,672.85 1895.55,657.46 1900.26,664.20 1904.97,647.87 1909.68,681.49 1914.39,658.41 1919.10,660.78 1923.82,651.10 1928.53,659.93 1933.24,643.59 1937.95,648.43 1942.66,637.70 1947.37,696.60 1952.08,693.08 1956.79,650.72 1961.50,643.40 1966.21,652.71 1970.92,661.74 1975.63,650.33 1980.34,653.09 1985.06,652.71 1989.77,679.21 1994.48,669.62 1999.19,676.75 2003.90,672.85 2008.61,673.23 2013.32,701.73 2018.03,670.95 2022.74,676.75 2027.45,683.39 2032.16,684.82 2036.87,713.23 2041.59,682.06 2046.30,673.80 2051.01,686.34 2055.72,680.54 2060.43,748.85 2065.14,763.29 2069.85,772.89 2074.56,776.68 2079.27,772.89 2083.98,761.30 2088.69,768.04 2093.40,774.21 2098.11,759.40 2102.83,742.11 2107.54,701.16 2112.25,690.14 2116.96,675.70 2121.67,669.62 2126.38,669.62 2131.09,684.06 2135.80,675.32 2140.51,660.41 2145.22,670.00 2149.93,686.91 2154.64,679.21 2159.36,673.80 2164.07,692.70 2168.78,686.34 2173.49,703.25 2178.20,695.93 2182.91,694.98 2187.62,686.34 2192.33,718.07 2197.04,680.54 2201.75,675.70 2206.46,660.41 2211.17,605.02 2215.89,595.90 2220.60,568.45 2225.31,562.65 2230.02,662.31 2234.73,616.52 2239.44,570.34 2244.15,566.16 2248.86,576.14 2253.57,578.99 2258.28,575.76 2262.99,571.48 2267.70,581.56 2272.41,581.93 2277.13,582.13 2281.84,583.46 2286.55,594.95 2291.26,620.98 2295.97,606.54 2300.68,600.18 2305.39,628.68 2310.10,605.59 2314.81,600.18 2319.52,605.59 2324.23,625.35 2328.94,628.01 2333.66,629.63 2338.37,614.62 2343.08,619.55 2347.79,624.40 2352.50,606.54 2357.21,617.47 2361.92,607.87 2366.63,631.14 2371.34,633.99 2376.05,621.93 2380.76,619.37 2385.47,631.53 2390.18,604.17 2394.90,612.91 2399.61,617.09 2404.32,659.36 2409.03,628.68 2413.74,635.70 2418.45,643.02 2423.16,683.87 2427.87,669.62 2432.58,664.20 2437.29,666.67 2442.00,658.98 2446.71,637.89 2451.43,638.65 2456.14,641.12 2460.85,653.66 2465.56,642.45 2470.27,642.07 2474.98,650.72 2479.69,659.36 2484.40,631.90 2489.11,632.47 2493.82,632.47 2498.53,641.69 2503.24,633.04 2507.95,631.53 2512.67,625.35 2517.38,651.67 2522.09,631.53 2526.80,620.60 2531.51,627.63 2536.22,645.01 2540.93,627.25 2545.64,623.26 2550.35,605.02 2555.06,643.59 2559.77,629.63 2564.48,615.19 2569.20,622.88 2573.91,650.33 2578.62,627.63 2583.33,626.68 2588.04,620.60 2592.75,614.81 2597.46,633.42 2602.17,606.54 2606.88,606.54 2611.59,603.03 2616.30,633.04 2621.01,612.24 2625.72,616.13 2630.44,610.91 2635.15,625.16 2639.86,590.77 2644.57,603.60 2649.28,604.17 2653.99,613.28 2658.70,597.90 2663.41,598.84 2668.12,592.10 2672.83,626.68 2677.54,595.90 2682.25,608.44 2686.97,612.24 2691.68,628.01 2696.39,592.48 2701.10,599.79 2705.81,575.76 2710.52,618.60 2715.23,614.24 2719.94,628.01 2724.65,607.49 2729.36,607.11 2734.07,620.98 2738.78,612.24 2743.49,607.49 2748.21,603.03 2752.92,615.76 2757.63,600.18 2762.34,596.28 2767.05,599.41 2771.76,620.98 2776.47,600.18 2781.18,594.00 2785.89,605.59 2790.60,632.47 2795.31,604.17 2800.02,602.26 2804.74,607.49 2809.45,636.37 2814.16,606.54 2818.87,596.47 2823.58,599.79 2828.29,618.98 2833.00,569.59 L2833.0,814.4 Z" fill="rgba(234,184,57,0.1)" /><polyline points="1481.00,676.18 1485.71,671.90 1490.42,671.90 1495.13,682.35 1499.84,673.80 1504.55,658.60 1509.26,658.60 1513.98,667.15 1518.69,659.55 1523.40,654.80 1528.11,662.40 1532.82,672.85 1537.53,657.65 1542.24,657.65 1546.95,662.40 1551.66,666.20 1556.37,658.60 1561.08,658.60 1565.79,662.40 1570.51,681.40 1575.22,663.83 1579.93,655.75 1584.64,662.40 1589.35,673.80 1594.06,653.85 1598.77,660.50 1603.48,671.90 1608.19,664.77 1612.90,689.00 1617.61,660.98 1622.32,676.18 1627.03,675.22 1631.75,668.58 1636.46,677.60 1641.17,690.90 1645.88,663.83 1650.59,664.77 1655.30,664.77 1660.01,672.85 1664.72,653.28 1669.43,658.41 1674.14,659.74 1678.85,675.13 1683.56,661.35 1688.28,640.74 1692.99,658.41 1697.70,659.93 1702.41,639.79 1707.12,640.74 1711.83,670.95 1716.54,641.50 1721.25,644.63 1725.96,647.20 1730.67,659.36 1735.38,635.80 1740.09,643.59 1744.80,631.53 1749.52,654.99 1754.23,644.63 1758.94,640.17 1763.65,652.33 1768.36,648.82 1773.07,642.07 1777.78,642.64 1782.49,662.88 1787.20,640.74 1791.91,636.75 1796.62,641.50 1801.33,658.03 1806.05,642.07 1810.76,627.63 1815.47,647.87 1820.18,655.56 1824.89,643.97 1829.60,650.15 1834.31,667.05 1839.02,667.05 1843.73,645.01 1848.44,643.40 1853.15,670.38 1857.86,660.98 1862.57,668.10 1867.29,659.36 1872.00,680.54 1876.71,655.94 1881.42,660.78 1886.13,641.50 1890.84,672.85 1895.55,657.46 1900.26,664.20 1904.97,647.87 1909.68,681.49 1914.39,658.41 1919.10,660.78 1923.82,651.10 1928.53,659.93 1933.24,643.59 1937.95,648.43 1942.66,637.70 1947.37,696.60 1952.08,693.08 1956.79,650.72 1961.50,643.40 1966.21,652.71 1970.92,661.74 1975.63,650.33 1980.34,653.09 1985.06,652.71 1989.77,679.21 1994.48,669.62 1999.19,676.75 2003.90,672.85 2008.61,673.23 2013.32,701.73 2018.03,670.95 2022.74,676.75 2027.45,683.39 2032.16,684.82 2036.87,713.23 2041.59,682.06 2046.30,673.80 2051.01,686.34 2055.72,680.54 2060.43,748.85 2065.14,763.29 2069.85,772.89 2074.56,776.68 2079.27,772.89 2083.98,761.30 2088.69,768.04 2093.40,774.21 2098.11,759.40 2102.83,742.11 2107.54,701.16 2112.25,690.14 2116.96,675.70 2121.67,669.62 2126.38,669.62 2131.09,684.06 2135.80,675.32 2140.51,660.41 2145.22,670.00 2149.93,686.91 2154.64,679.21 2159.36,673.80 2164.07,692.70 2168.78,686.34 2173.49,703.25 2178.20,695.93 2182.91,694.98 2187.62,686.34 2192.33,718.07 2197.04,680.54 2201.75,675.70 2206.46,660.41 2211.17,605.02 2215.89,595.90 2220.60,568.45 2225.31,562.65 2230.02,662.31 2234.73,616.52 2239.44,570.34 2244.15,566.16 2248.86,576.14 2253.57,578.99 2258.28,575.76 2262.99,571.48 2267.70,581.56 2272.41,581.93 2277.13,582.13 2281.84,583.46 2286.55,594.95 2291.26,620.98 2295.97,606.54 2300.68,600.18 2305.39,628.68 2310.10,605.59 2314.81,600.18 2319.52,605.59 2324.23,625.35 2328.94,628.01 2333.66,629.63 2338.37,614.62 2343.08,619.55 2347.79,624.40 2352.50,606.54 2357.21,617.47 2361.92,607.87 2366.63,631.14 2371.34,633.99 2376.05,621.93 2380.76,619.37 2385.47,631.53 2390.18,604.17 2394.90,612.91 2399.61,617.09 2404.32,659.36 2409.03,628.68 2413.74,635.70 2418.45,643.02 2423.16,683.87 2427.87,669.62 2432.58,664.20 2437.29,666.67 2442.00,658.98 2446.71,637.89 2451.43,638.65 2456.14,641.12 2460.85,653.66 2465.56,642.45 2470.27,642.07 2474.98,650.72 2479.69,659.36 2484.40,631.90 2489.11,632.47 2493.82,632.47 2498.53,641.69 2503.24,633.04 2507.95,631.53 2512.67,625.35 2517.38,651.67 2522.09,631.53 2526.80,620.60 2531.51,627.63 2536.22,645.01 2540.93,627.25 2545.64,623.26 2550.35,605.02 2555.06,643.59 2559.77,629.63 2564.48,615.19 2569.20,622.88 2573.91,650.33 2578.62,627.63 2583.33,626.68 2588.04,620.60 2592.75,614.81 2597.46,633.42 2602.17,606.54 2606.88,606.54 2611.59,603.03 2616.30,633.04 2621.01,612.24 2625.72,616.13 2630.44,610.91 2635.15,625.16 2639.86,590.77 2644.57,603.60 2649.28,604.17 2653.99,613.28 2658.70,597.90 2663.41,598.84 2668.12,592.10 2672.83,626.68 2677.54,595.90 2682.25,608.44 2686.97,612.24 2691.68,628.01 2696.39,592.48 2701.10,599.79 2705.81,575.76 2710.52,618.60 2715.23,614.24 2719.94,628.01 2724.65,607.49 2729.36,607.11 2734.07,620.98 2738.78,612.24 2743.49,607.49 2748.21,603.03 2752.92,615.76 2757.63,600.18 2762.34,596.28 2767.05,599.41 2771.76,620.98 2776.47,600.18 2781.18,594.00 2785.89,605.59 2790.60,632.47 2795.31,604.17 2800.02,602.26 2804.74,607.49 2809.45,636.37 2814.16,606.54 2818.87,596.47 2823.58,599.79 2828.29,618.98 2833.00,569.59" fill="none" stroke="#eab839" stroke-width="1" stroke-linejoin="round"/></svg>
<div class="t" style="right:1401.50px;top:523.12px;font-size:12.5px;color:#ccccdc;">93</div>
<div class="t" style="right:1401.50px;top:570.62px;font-size:12.5px;color:#ccccdc;">92.5</div>
<div class="t" style="right:1401.50px;top:618.12px;font-size:12.5px;color:#ccccdc;">92</div>
<div class="t" style="right:1401.50px;top:665.62px;font-size:12.5px;color:#ccccdc;">91.5</div>
<div class="t" style="right:1401.50px;top:713.12px;font-size:12.5px;color:#ccccdc;">91</div>
<div class="t" style="right:1401.50px;top:760.62px;font-size:12.5px;color:#ccccdc;">90.5</div>
<div class="t" style="right:1401.50px;top:808.12px;font-size:12.5px;color:#ccccdc;">90</div>
<div class="t" style="left:1242.24px;width:600px;text-align:center;top:823.22px;font-size:12.5px;color:#ccccdc;-webkit-text-stroke:0.15px #ccccdc;">18:00</div>
<div class="t" style="left:1355.30px;width:600px;text-align:center;top:823.22px;font-size:12.5px;color:#ccccdc;-webkit-text-stroke:0.15px #ccccdc;">20:00</div>
<div class="t" style="left:1468.36px;width:600px;text-align:center;top:823.22px;font-size:12.5px;color:#ccccdc;-webkit-text-stroke:0.15px #ccccdc;">22:00</div>
<div class="t" style="left:1581.42px;width:600px;text-align:center;top:823.22px;font-size:12.5px;color:#ccccdc;-webkit-text-stroke:0.15px #ccccdc;">00:00</div>
<div class="t" style="left:1694.48px;width:600px;text-align:center;top:823.22px;font-size:12.5px;color:#ccccdc;-webkit-text-stroke:0.15px #ccccdc;">02:00</div>
<div class="t" style="left:1807.54px;width:600px;text-align:center;top:823.22px;font-size:12.5px;color:#ccccdc;-webkit-text-stroke:0.15px #ccccdc;">04:00</div>
<div class="t" style="left:1920.60px;width:600px;text-align:center;top:823.22px;font-size:12.5px;color:#ccccdc;-webkit-text-stroke:0.15px #ccccdc;">06:00</div>
<div class="t" style="left:2033.66px;width:600px;text-align:center;top:823.22px;font-size:12.5px;color:#ccccdc;-webkit-text-stroke:0.15px #ccccdc;">08:00</div>
<div class="t" style="left:2146.71px;width:600px;text-align:center;top:823.22px;font-size:12.5px;color:#ccccdc;-webkit-text-stroke:0.15px #ccccdc;">10:00</div>
<div class="t" style="left:2259.77px;width:600px;text-align:center;top:823.22px;font-size:12.5px;color:#ccccdc;-webkit-text-stroke:0.15px #ccccdc;">12:00</div>
<div class="t" style="left:2372.83px;width:600px;text-align:center;top:823.22px;font-size:12.5px;color:#ccccdc;-webkit-text-stroke:0.15px #ccccdc;">14:00</div>
<div class="t" style="left:2485.89px;width:600px;text-align:center;top:823.22px;font-size:12.5px;color:#ccccdc;-webkit-text-stroke:0.15px #ccccdc;">16:00</div>
<svg class="a" style="left:0;top:0" width="2876" height="1414"><path d="M1481.0 985.5H2833.0" stroke="rgba(204,204,220,0.2)" stroke-width="1"/><path d="M1481.0 1037.5H2833.0" stroke="rgba(204,204,220,0.2)" stroke-width="1"/><path d="M1481.0 1089.5H2833.0" stroke="rgba(204,204,220,0.2)" stroke-width="1"/><path d="M1481.0 1140.5H2833.0" stroke="rgba(204,204,220,0.2)" stroke-width="1"/><path d="M1481.0 1192.5H2833.0" stroke="rgba(204,204,220,0.2)" stroke-width="1"/><path d="M1481.0 1244.5H2833.0" stroke="rgba(204,204,220,0.2)" stroke-width="1"/><path d="M1481.0 1296.5H2833.0" stroke="rgba(204,204,220,0.2)" stroke-width="1"/><path d="M1542.5 985.4V1296.4" stroke="rgba(204,204,220,0.2)" stroke-width="1"/><path d="M1655.5 985.4V1296.4" stroke="rgba(204,204,220,0.2)" stroke-width="1"/><path d="M1768.5 985.4V1296.4" stroke="rgba(204,204,220,0.2)" stroke-width="1"/><path d="M1881.5 985.4V1296.4" stroke="rgba(204,204,220,0.2)" stroke-width="1"/><path d="M1994.5 985.4V1296.4" stroke="rgba(204,204,220,0.2)" stroke-width="1"/><path d="M2107.5 985.4V1296.4" stroke="rgba(204,204,220,0.2)" stroke-width="1"/><path d="M2220.5 985.4V1296.4" stroke="rgba(204,204,220,0.2)" stroke-width="1"/><path d="M2333.5 985.4V1296.4" stroke="rgba(204,204,220,0.2)" stroke-width="1"/><path d="M2446.5 985.4V1296.4" stroke="rgba(204,204,220,0.2)" stroke-width="1"/><path d="M2559.5 985.4V1296.4" stroke="rgba(204,204,220,0.2)" stroke-width="1"/><path d="M2672.5 985.4V1296.4" stroke="rgba(204,204,220,0.2)" stroke-width="1"/><path d="M2785.5 985.4V1296.4" stroke="rgba(204,204,220,0.2)" stroke-width="1"/><path d="M1481.0,1296.4 L1481.00,1145.57 1485.71,1140.90 1490.42,1140.90 1495.13,1152.30 1499.84,1142.97 1504.55,1126.39 1509.26,1126.39 1513.98,1135.72 1518.69,1127.42 1523.40,1122.24 1528.11,1130.53 1532.82,1141.94 1537.53,1125.35 1542.24,1125.35 1546.95,1130.53 1551.66,1134.68 1556.37,1126.39 1561.08,1126.39 1565.79,1130.53 1570.51,1151.27 1575.22,1132.09 1579.93,1123.28 1584.64,1130.53 1589.35,1142.97 1594.06,1121.20 1598.77,1128.46 1603.48,1140.90 1608.19,1133.12 1612.90,1159.56 1617.61,1128.98 1622.32,1145.57 1627.03,1144.53 1631.75,1137.27 1636.46,1147.12 1641.17,1161.63 1645.88,1132.09 1650.59,1133.12 1655.30,1133.12 1660.01,1141.94 1664.72,1120.58 1669.43,1126.18 1674.14,1127.63 1678.85,1144.42 1683.56,1129.39 1688.28,1106.90 1692.99,1126.18 1697.70,1127.84 1702.41,1105.86 1707.12,1106.90 1711.83,1139.86 1716.54,1107.73 1721.25,1111.15 1725.96,1113.95 1730.67,1127.22 1735.38,1101.51 1740.09,1110.01 1744.80,1096.84 1749.52,1122.45 1754.23,1111.15 1758.94,1106.28 1763.65,1119.54 1768.36,1115.71 1773.07,1108.35 1777.78,1108.97 1782.49,1131.05 1787.20,1106.90 1791.91,1102.54 1796.62,1107.73 1801.33,1125.76 1806.05,1108.35 1810.76,1092.59 1815.47,1114.67 1820.18,1123.07 1824.89,1110.42 1829.60,1117.16 1834.31,1135.61 1839.02,1135.61 1843.73,1111.56 1848.44,1109.80 1853.15,1139.24 1857.86,1128.98 1862.57,1136.75 1867.29,1127.22 1872.00,1150.33 1876.71,1123.48 1881.42,1128.77 1886.13,1107.73 1890.84,1141.94 1895.55,1125.14 1900.26,1132.50 1904.97,1114.67 1909.68,1151.37 1914.39,1126.18 1919.10,1128.77 1923.82,1118.20 1928.53,1127.84 1933.24,1110.01 1937.95,1115.29 1942.66,1103.58 1947.37,1167.85 1952.08,1164.02 1956.79,1117.78 1961.50,1109.80 1966.21,1119.96 1970.92,1129.81 1975.63,1117.37 1980.34,1120.37 1985.06,1119.96 1989.77,1148.88 1994.48,1138.41 1999.19,1146.19 2003.90,1141.94 2008.61,1142.35 2013.32,1173.45 2018.03,1139.86 2022.74,1146.19 2027.45,1153.44 2032.16,1155.00 2036.87,1186.00 2041.59,1151.99 2046.30,1142.97 2051.01,1156.66 2055.72,1150.33 2060.43,1224.87 2065.14,1240.63 2069.85,1251.10 2074.56,1255.24 2079.27,1251.10 2083.98,1238.45 2088.69,1245.81 2093.40,1252.55 2098.11,1236.38 2102.83,1217.51 2107.54,1172.83 2112.25,1160.80 2116.96,1145.05 2121.67,1138.41 2126.38,1138.41 2131.09,1154.17 2135.80,1144.63 2140.51,1128.36 2145.22,1138.83 2149.93,1157.28 2154.64,1148.88 2159.36,1142.97 2164.07,1163.60 2168.78,1156.66 2173.49,1175.11 2178.20,1167.13 2182.91,1166.09 2187.62,1156.66 2192.33,1191.28 2197.04,1150.33 2201.75,1145.05 2206.46,1128.36 2211.17,1067.92 2215.89,1057.97 2220.60,1028.01 2225.31,1021.68 2230.02,1130.43 2234.73,1080.46 2239.44,1030.08 2244.15,1025.52 2248.86,1036.40 2253.57,1039.51 2258.28,1035.99 2262.99,1031.32 2267.70,1042.31 2272.41,1042.73 2277.13,1042.94 2281.84,1044.39 2286.55,1056.93 2291.26,1085.33 2295.97,1069.58 2300.68,1062.63 2305.39,1093.73 2310.10,1068.54 2314.81,1062.63 2319.52,1068.54 2324.23,1090.10 2328.94,1093.01 2333.66,1094.77 2338.37,1078.39 2343.08,1083.78 2347.79,1089.07 2352.50,1069.58 2357.21,1081.50 2361.92,1071.03 2366.63,1096.43 2371.34,1099.54 2376.05,1086.37 2380.76,1083.57 2385.47,1096.84 2390.18,1066.99 2394.90,1076.52 2399.61,1081.08 2404.32,1127.22 2409.03,1093.73 2413.74,1101.40 2418.45,1109.39 2423.16,1153.96 2427.87,1138.41 2432.58,1132.50 2437.29,1135.20 2442.00,1126.80 2446.71,1103.79 2451.43,1104.62 2456.14,1107.31 2460.85,1121.00 2465.56,1108.76 2470.27,1108.35 2474.98,1117.78 2479.69,1127.22 2484.40,1097.26 2489.11,1097.88 2493.82,1097.88 2498.53,1107.93 2503.24,1098.50 2507.95,1096.84 2512.67,1090.10 2517.38,1118.82 2522.09,1096.84 2526.80,1084.92 2531.51,1092.59 2536.22,1111.56 2540.93,1092.18 2545.64,1087.82 2550.35,1067.92 2555.06,1110.01 2559.77,1094.77 2564.48,1079.01 2569.20,1087.41 2573.91,1117.37 2578.62,1092.59 2583.33,1091.55 2588.04,1084.92 2592.75,1078.60 2597.46,1098.91 2602.17,1069.58 2606.88,1069.58 2611.59,1065.74 2616.30,1098.50 2621.01,1075.80 2625.72,1080.05 2630.44,1074.35 2635.15,1089.90 2639.86,1052.37 2644.57,1066.36 2649.28,1066.99 2653.99,1076.94 2658.70,1060.14 2663.41,1061.18 2668.12,1053.82 2672.83,1091.55 2677.54,1057.97 2682.25,1071.65 2686.97,1075.80 2691.68,1093.01 2696.39,1054.23 2701.10,1062.22 2705.81,1035.99 2710.52,1082.74 2715.23,1077.97 2719.94,1093.01 2724.65,1070.61 2729.36,1070.20 2734.07,1085.33 2738.78,1075.80 2743.49,1070.61 2748.21,1065.74 2752.92,1079.63 2757.63,1062.63 2762.34,1058.38 2767.05,1061.80 2771.76,1085.33 2776.47,1062.63 2781.18,1055.89 2785.89,1068.54 2790.60,1097.88 2795.31,1066.99 2800.02,1064.91 2804.74,1070.61 2809.45,1102.13 2814.16,1069.58 2818.87,1058.59 2823.58,1062.22 2828.29,1083.16 2833.00,1029.25 L2833.0,1296.4 Z" fill="rgba(126,178,109,0.1)" /><polyline points="1481.00,1145.57 1485.71,1140.90 1490.42,1140.90 1495.13,1152.30 1499.84,1142.97 1504.55,1126.39 1509.26,1126.39 1513.98,1135.72 1518.69,1127.42 1523.40,1122.24 1528.11,1130.53 1532.82,1141.94 1537.53,1125.35 1542.24,1125.35 1546.95,1130.53 1551.66,1134.68 1556.37,1126.39 1561.08,1126.39 1565.79,1130.53 1570.51,1151.27 1575.22,1132.09 1579.93,1123.28 1584.64,1130.53 1589.35,1142.97 1594.06,1121.20 1598.77,1128.46 1603.48,1140.90 1608.19,1133.12 1612.90,1159.56 1617.61,1128.98 1622.32,1145.57 1627.03,1144.53 1631.75,1137.27 1636.46,1147.12 1641.17,1161.63 1645.88,1132.09 1650.59,1133.12 1655.30,1133.12 1660.01,1141.94 1664.72,1120.58 1669.43,1126.18 1674.14,1127.63 1678.85,1144.42 1683.56,1129.39 1688.28,1106.90 1692.99,1126.18 1697.70,1127.84 1702.41,1105.86 1707.12,1106.90 1711.83,1139.86 1716.54,1107.73 1721.25,1111.15 1725.96,1113.95 1730.67,1127.22 1735.38,1101.51 1740.09,1110.01 1744.80,1096.84 1749.52,1122.45 1754.23,1111.15 1758.94,1106.28 1763.65,1119.54 1768.36,1115.71 1773.07,1108.35 1777.78,1108.97 1782.49,1131.05 1787.20,1106.90 1791.91,1102.54 1796.62,1107.73 1801.33,1125.76 1806.05,1108.35 1810.76,1092.59 1815.47,1114.67 1820.18,1123.07 1824.89,1110.42 1829.60,1117.16 1834.31,1135.61 1839.02,1135.61 1843.73,1111.56 1848.44,1109.80 1853.15,1139.24 1857.86,1128.98 1862.57,1136.75 1867.29,1127.22 1872.00,1150.33 1876.71,1123.48 1881.42,1128.77 1886.13,1107.73 1890.84,1141.94 1895.55,1125.14 1900.26,1132.50 1904.97,1114.67 1909.68,1151.37 1914.39,1126.18 1919.10,1128.77 1923.82,1118.20 1928.53,1127.84 1933.24,1110.01 1937.95,1115.29 1942.66,1103.58 1947.37,1167.85 1952.08,1164.02 1956.79,1117.78 1961.50,1109.80 1966.21,1119.96 1970.92,1129.81 1975.63,1117.37 1980.34,1120.37 1985.06,1119.96 1989.77,1148.88 1994.48,1138.41 1999.19,1146.19 2003.90,1141.94 2008.61,1142.35 2013.32,1173.45 2018.03,1139.86 2022.74,1146.19 2027.45,1153.44 2032.16,1155.00 2036.87,1186.00 2041.59,1151.99 2046.30,1142.97 2051.01,1156.66 2055.72,1150.33 2060.43,1224.87 2065.14,1240.63 2069.85,1251.10 2074.56,1255.24 2079.27,1251.10 2083.98,1238.45 2088.69,1245.81 2093.40,1252.55 2098.11,1236.38 2102.83,1217.51 2107.54,1172.83 2112.25,1160.80 2116.96,1145.05 2121.67,1138.41 2126.38,1138.41 2131.09,1154.17 2135.80,1144.63 2140.51,1128.36 2145.22,1138.83 2149.93,1157.28 2154.64,1148.88 2159.36,1142.97 2164.07,1163.60 2168.78,1156.66 2173.49,1175.11 2178.20,1167.13 2182.91,1166.09 2187.62,1156.66 2192.33,1191.28 2197.04,1150.33 2201.75,1145.05 2206.46,1128.36 2211.17,1067.92 2215.89,1057.97 2220.60,1028.01 2225.31,1021.68 2230.02,1130.43 2234.73,1080.46 2239.44,1030.08 2244.15,1025.52 2248.86,1036.40 2253.57,1039.51 2258.28,1035.99 2262.99,1031.32 2267.70,1042.31 2272.41,1042.73 2277.13,1042.94 2281.84,1044.39 2286.55,1056.93 2291.26,1085.33 2295.97,1069.58 2300.68,1062.63 2305.39,1093.73 2310.10,1068.54 2314.81,1062.63 2319.52,1068.54 2324.23,1090.10 2328.94,1093.01 2333.66,1094.77 2338.37,1078.39 2343.08,1083.78 2347.79,1089.07 2352.50,1069.58 2357.21,1081.50 2361.92,1071.03 2366.63,1096.43 2371.34,1099.54 2376.05,1086.37 2380.76,1083.57 2385.47,1096.84 2390.18,1066.99 2394.90,1076.52 2399.61,1081.08 2404.32,1127.22 2409.03,1093.73 2413.74,1101.40 2418.45,1109.39 2423.16,1153.96 2427.87,1138.41 2432.58,1132.50 2437.29,1135.20 2442.00,1126.80 2446.71,1103.79 2451.43,1104.62 2456.14,1107.31 2460.85,1121.00 2465.56,1108.76 2470.27,1108.35 2474.98,1117.78 2479.69,1127.22 2484.40,1097.26 2489.11,1097.88 2493.82,1097.88 2498.53,1107.93 2503.24,1098.50 2507.95,1096.84 2512.67,1090.10 2517.38,1118.82 2522.09,1096.84 2526.80,1084.92 2531.51,1092.59 2536.22,1111.56 2540.93,1092.18 2545.64,1087.82 2550.35,1067.92 2555.06,1110.01 2559.77,1094.77 2564.48,1079.01 2569.20,1087.41 2573.91,1117.37 2578.62,1092.59 2583.33,1091.55 2588.04,1084.92 2592.75,1078.60 2597.46,1098.91 2602.17,1069.58 2606.88,1069.58 2611.59,1065.74 2616.30,1098.50 2621.01,1075.80 2625.72,1080.05 2630.44,1074.35 2635.15,1089.90 2639.86,1052.37 2644.57,1066.36 2649.28,1066.99 2653.99,1076.94 2658.70,1060.14 2663.41,1061.18 2668.12,1053.82 2672.83,1091.55 2677.54,1057.97 2682.25,1071.65 2686.97,1075.80 2691.68,1093.01 2696.39,1054.23 2701.10,1062.22 2705.81,1035.99 2710.52,1082.74 2715.23,1077.97 2719.94,1093.01 2724.65,1070.61 2729.36,1070.20 2734.07,1085.33 2738.78,1075.80 2743.49,1070.61 2748.21,1065.74 2752.92,1079.63 2757.63,1062.63 2762.34,1058.38 2767.05,1061.80 2771.76,1085.33 2776.47,1062.63 2781.18,1055.89 2785.89,1068.54 2790.60,1097.88 2795.31,1066.99 2800.02,1064.91 2804.74,1070.61 2809.45,1102.13 2814.16,1069.58 2818.87,1058.59 2823.58,1062.22 2828.29,1083.16 2833.00,1029.25" fill="none" stroke="#7eb26d" stroke-width="1" stroke-linejoin="round"/></svg>
<div class="t" style="right:1401.50px;top:979.12px;font-size:12.5px;color:#ccccdc;">93</div>
<div class="t" style="right:1401.50px;top:1030.95px;font-size:12.5px;color:#ccccdc;">92.5</div>
<div class="t" style="right:1401.50px;top:1082.78px;font-size:12.5px;color:#ccccdc;">92</div>
<div class="t" style="right:1401.50px;top:1134.62px;font-size:12.5px;color:#ccccdc;">91.5</div>
<div class="t" style="right:1401.50px;top:1186.45px;font-size:12.5px;color:#ccccdc;">91</div>
<div class="t" style="right:1401.50px;top:1238.28px;font-size:12.5px;color:#ccccdc;">90.5</div>
<div class="t" style="right:1401.50px;top:1290.12px;font-size:12.5px;color:#ccccdc;">90</div>
<div class="t" style="left:1242.24px;width:600px;text-align:center;top:1305.22px;font-size:12.5px;color:#ccccdc;-webkit-text-stroke:0.15px #ccccdc;">18:00</div>
<div class="t" style="left:1355.30px;width:600px;text-align:center;top:1305.22px;font-size:12.5px;color:#ccccdc;-webkit-text-stroke:0.15px #ccccdc;">20:00</div>
<div class="t" style="left:1468.36px;width:600px;text-align:center;top:1305.22px;font-size:12.5px;color:#ccccdc;-webkit-text-stroke:0.15px #ccccdc;">22:00</div>
<div class="t" style="left:1581.42px;width:600px;text-align:center;top:1305.22px;font-size:12.5px;color:#ccccdc;-webkit-text-stroke:0.15px #ccccdc;">00:00</div>
<div class="t" style="left:1694.48px;width:600px;text-align:center;top:1305.22px;font-size:12.5px;color:#ccccdc;-webkit-text-stroke:0.15px #ccccdc;">02:00</div>
<div class="t" style="left:1807.54px;width:600px;text-align:center;top:1305.22px;font-size:12.5px;color:#ccccdc;-webkit-text-stroke:0.15px #ccccdc;">04:00</div>
<div class="t" style="left:1920.60px;width:600px;text-align:center;top:1305.22px;font-size:12.5px;color:#ccccdc;-webkit-text-stroke:0.15px #ccccdc;">06:00</div>
<div class="t" style="left:2033.66px;width:600px;text-align:center;top:1305.22px;font-size:12.5px;color:#ccccdc;-webkit-text-stroke:0.15px #ccccdc;">08:00</div>
<div class="t" style="left:2146.71px;width:600px;text-align:center;top:1305.22px;font-size:12.5px;color:#ccccdc;-webkit-text-stroke:0.15px #ccccdc;">10:00</div>
<div class="t" style="left:2259.77px;width:600px;text-align:center;top:1305.22px;font-size:12.5px;color:#ccccdc;-webkit-text-stroke:0.15px #ccccdc;">12:00</div>
<div class="t" style="left:2372.83px;width:600px;text-align:center;top:1305.22px;font-size:12.5px;color:#ccccdc;-webkit-text-stroke:0.15px #ccccdc;">14:00</div>
<div class="t" style="left:2485.89px;width:600px;text-align:center;top:1305.22px;font-size:12.5px;color:#ccccdc;-webkit-text-stroke:0.15px #ccccdc;">16:00</div>
<div class="t" style="left:2663.80px;top:415.74px;font-size:13.3px;color:#3a9fe3;">min</div>
<div class="t" style="left:2702.90px;top:415.74px;font-size:13.3px;color:#3a9fe3;">max</div>
<div class="t" style="left:2746.90px;top:415.74px;font-size:13.3px;color:#3a9fe3;">avg</div>
<div class="t" style="left:2777.70px;top:415.74px;font-size:13.3px;color:#3a9fe3;">current</div>
<svg class="a" style="left:2822px;top:420.0px" width="10" height="7" viewBox="0 0 10 7"><path d="M1 1.2l4 4 4-4" fill="none" stroke="#3a9fe3" stroke-width="1.4"/></svg>
<div class="a" style="left:1456px;top:447px;width:14px;height:4px;background:#7eb26d;border-radius:2px;"></div>
<div class="t" style="left:1480.40px;top:439.54px;font-size:13.3px;color:#ccccdc;">system.cpu.idle{*}</div>
<div class="t" style="left:2666.40px;top:439.54px;font-size:13.3px;color:#ccccdc;">90.4</div>
<div class="t" style="left:2709.50px;top:439.54px;font-size:13.3px;color:#ccccdc;">92.6</div>
<div class="t" style="left:2752.20px;top:439.54px;font-size:13.3px;color:#ccccdc;">91.8</div>
<div class="t" style="left:2818.40px;top:439.54px;font-size:13.3px;color:#ccccdc;">92.6</div>
<div class="t" style="left:2679.50px;top:845.54px;font-size:13.3px;color:#3a9fe3;">min</div>
<div class="t" style="left:2719.00px;top:845.54px;font-size:13.3px;color:#3a9fe3;">max</div>
<div class="t" style="left:2763.00px;top:845.54px;font-size:13.3px;color:#3a9fe3;">avg</div>
<div class="t" style="left:2793.80px;top:845.54px;font-size:13.3px;color:#3a9fe3;">current</div>
<div class="a" style="left:1456px;top:876px;width:14px;height:4px;background:#7eb26d;border-radius:2px;"></div>
<div class="t" style="left:1480.40px;top:868.54px;font-size:13.3px;color:#ccccdc;">system.cpu.idle{*}</div>
<div class="t" style="left:2682.00px;top:868.54px;font-size:13.3px;color:#ccccdc;">90.4</div>
<div class="t" style="left:2725.60px;top:868.54px;font-size:13.3px;color:#ccccdc;">92.6</div>
<div class="t" style="left:2768.00px;top:868.54px;font-size:13.3px;color:#ccccdc;">91.8</div>
<div class="t" style="left:2818.70px;top:868.54px;font-size:13.3px;color:#ccccdc;">92.6</div>
<div class="a" style="left:1454px;top:890px;width:1392px;height:27px;background:#212328;"></div>
<div class="a" style="left:1456px;top:903px;width:14px;height:4px;background:#eab839;border-radius:2px;"></div>
<div class="t" style="left:1480.40px;top:895.34px;font-size:13.3px;color:#ccccdc;">system.cpu.idle{*}</div>
<div class="t" style="left:2682.00px;top:895.34px;font-size:13.3px;color:#ccccdc;">90.4</div>
<div class="t" style="left:2725.60px;top:895.34px;font-size:13.3px;color:#ccccdc;">92.6</div>
<div class="t" style="left:2768.00px;top:895.34px;font-size:13.3px;color:#ccccdc;">91.8</div>
<div class="t" style="left:2818.70px;top:895.34px;font-size:13.3px;color:#ccccdc;">92.6</div>
<div class="t" style="left:2679.50px;top:1327.74px;font-size:13.3px;color:#3a9fe3;">min</div>
<div class="t" style="left:2719.00px;top:1327.74px;font-size:13.3px;color:#3a9fe3;">max</div>
<div class="t" style="left:2763.00px;top:1327.74px;font-size:13.3px;color:#3a9fe3;">avg</div>
<div class="t" style="left:2793.80px;top:1327.74px;font-size:13.3px;color:#3a9fe3;">current</div>
<div class="a" style="left:1456px;top:1359px;width:14px;height:4px;background:#7eb26d;border-radius:2px;"></div>
<div class="t" style="left:1480.40px;top:1351.44px;font-size:13.3px;color:#ccccdc;">system.cpu.idle{*}</div>
<div class="t" style="left:2682.00px;top:1351.44px;font-size:13.3px;color:#ccccdc;">90.4</div>
<div class="t" style="left:2725.60px;top:1351.44px;font-size:13.3px;color:#ccccdc;">92.6</div>
<div class="t" style="left:2768.00px;top:1351.44px;font-size:13.3px;color:#ccccdc;">91.8</div>
<div class="t" style="left:2818.70px;top:1351.44px;font-size:13.3px;color:#ccccdc;">92.6</div>
<svg class="a" style="left:0;top:0" width="2876" height="1414"><g transform="translate(590.000,240.000) scale(0.09472)"><path d="M465,112 C680,112 840,260 840,560 C840,900 700,1152 460,1152 C290,1152 160,1050 125,870 L285,870 C310,950 370,1010 460,1010 C600,1010 680,880 685,675 C630,740 560,790 460,790 C260,790 115,640 115,450 C115,250 270,112 465,112 Z M468,250 C365,250 275,330 275,455 C275,580 365,662 468,662 C580,662 665,570 665,455 C665,330 580,250 468,250 Z" fill="#f2495c" fill-rule="evenodd"/></g><g transform="translate(590.000,240.000) scale(0.09472)"><path d="M990,285 L1215,125 L1405,125 L1405,1140 L1238,1140 L1238,290 L990,445 Z" fill="#f2495c" fill-rule="evenodd"/></g><g transform="translate(720.000,240.000) scale(0.09472)"><path d="M238,1048 A102,102 0 1,0 442,1048 A102,102 0 1,0 238,1048 Z" fill="#f2495c" fill-rule="evenodd"/></g><g transform="translate(720.000,240.000) scale(0.09472)"><path d="M940,115 C1120,115 1262,235 1262,390 C1262,500 1200,580 1110,610 C1220,650 1300,750 1300,880 C1300,1040 1150,1152 940,1152 C730,1152 578,1040 578,880 C578,750 660,650 765,610 C675,580 612,500 612,390 C612,235 760,115 940,115 Z M937,248 C1030,248 1105,315 1105,398 C1105,485 1030,550 937,550 C845,550 770,485 770,398 C770,315 845,248 937,248 Z M937,688 C1050,688 1135,760 1135,852 C1135,945 1050,1018 937,1018 C825,1018 740,945 740,852 C740,760 825,688 937,688 Z" fill="#f2495c" fill-rule="evenodd"/></g></svg>
<svg class="a" style="left:0;top:0" width="2876" height="1414"><path d="M12.6,469 L12.60,389.26 17.54,385.89 22.48,385.89 27.43,394.12 32.37,387.38 37.31,375.40 42.25,375.40 47.20,382.14 52.14,376.15 57.08,372.40 62.02,378.40 66.96,386.63 71.91,374.65 76.85,374.65 81.79,378.40 86.73,381.39 91.67,375.40 96.62,375.40 101.56,378.40 106.50,393.38 111.44,379.52 116.39,373.15 121.33,378.40 126.27,387.38 131.21,371.65 136.15,376.90 141.10,385.89 146.04,380.27 150.98,399.37 155.92,377.27 160.86,389.26 165.81,388.51 170.75,383.26 175.69,390.38 180.63,400.87 185.58,379.52 190.52,380.27 195.46,380.27 200.40,386.63 205.34,371.20 210.29,375.25 215.23,376.30 220.17,388.43 225.11,377.57 230.06,361.32 235.00,375.25 239.94,376.45 244.88,360.57 249.82,361.32 254.77,385.14 259.71,361.92 264.65,364.39 269.59,366.41 274.53,376.00 279.48,357.42 284.42,363.57 289.36,354.05 294.30,372.55 299.25,364.39 304.19,360.87 309.13,370.46 314.07,367.68 319.01,362.37 323.96,362.82 328.90,378.77 333.84,361.32 338.78,358.17 343.72,361.92 348.67,374.95 353.61,362.37 358.55,350.98 363.49,366.94 368.44,373.00 373.38,363.86 378.32,368.73 383.26,382.07 388.20,382.07 393.15,364.69 398.09,363.42 403.03,384.69 407.97,377.27 412.91,382.89 417.86,376.00 422.80,392.70 427.74,373.30 432.68,377.12 437.63,361.92 442.57,386.63 447.51,374.50 452.45,379.82 457.39,366.94 462.34,393.45 467.28,375.25 472.22,377.12 477.16,369.48 482.11,376.45 487.05,363.57 491.99,367.39 496.93,358.92 501.87,405.36 506.82,402.59 511.76,369.18 516.70,363.42 521.64,370.76 526.58,377.87 531.53,368.88 536.47,371.06 541.41,370.76 546.35,391.65 551.30,384.09 556.24,389.71 561.18,386.63 566.12,386.93 571.06,409.40 576.01,385.14 580.95,389.71 585.89,394.95 590.83,396.07 595.77,418.47 600.72,393.90 605.66,387.38 610.60,397.27 615.54,392.70 620.49,446.55 625.43,457.94 630.37,465.50 635.31,468.50 640.25,465.50 645.20,456.37 650.14,461.68 655.08,466.55 660.02,454.87 664.97,441.24 669.91,408.95 674.85,400.27 679.79,388.88 684.73,384.09 689.68,384.09 694.62,395.47 699.56,388.58 704.50,376.82 709.44,384.39 714.39,397.72 719.33,391.65 724.27,387.38 729.21,402.29 734.16,397.27 739.10,410.60 744.04,404.84 748.98,404.09 753.92,397.27 758.87,422.29 763.81,392.70 768.75,388.88 773.69,376.82 778.63,333.16 783.58,325.97 788.52,304.32 793.46,299.75 798.40,378.32 803.35,342.22 808.29,305.82 813.23,302.52 818.17,310.39 823.11,312.63 828.06,310.09 833.00,306.72 837.94,314.66 842.88,314.96 847.83,315.10 852.77,316.15 857.71,325.22 862.65,345.74 867.59,334.35 872.54,329.34 877.48,351.81 882.42,333.61 887.36,329.34 892.30,333.61 897.25,349.18 902.19,351.28 907.13,352.55 912.07,340.72 917.02,344.62 921.96,348.44 926.90,334.35 931.84,342.97 936.78,335.40 941.73,353.75 946.67,356.00 951.61,346.49 956.55,344.47 961.49,354.05 966.44,332.48 971.38,339.37 976.32,342.67 981.26,376.00 986.21,351.81 991.15,357.35 996.09,363.12 1001.03,395.32 1005.97,384.09 1010.92,379.82 1015.86,381.77 1020.80,375.70 1025.74,359.07 1030.69,359.67 1035.63,361.62 1040.57,371.50 1045.51,362.67 1050.45,362.37 1055.40,369.18 1060.34,376.00 1065.28,354.35 1070.22,354.80 1075.16,354.80 1080.11,362.07 1085.05,355.25 1089.99,354.05 1094.93,349.18 1099.88,369.93 1104.82,354.05 1109.76,345.44 1114.70,350.98 1119.64,364.69 1124.59,350.68 1129.53,347.54 1134.47,333.16 1139.41,363.57 1144.35,352.55 1149.30,341.17 1154.24,347.24 1159.18,368.88 1164.12,350.98 1169.07,350.23 1174.01,345.44 1178.95,340.87 1183.89,355.55 1188.83,334.35 1193.78,334.35 1198.72,331.58 1203.66,355.25 1208.60,338.85 1213.54,341.92 1218.49,337.80 1223.43,349.03 1228.37,321.92 1233.31,332.03 1238.26,332.48 1243.20,339.67 1248.14,327.54 1253.08,328.29 1258.02,322.97 1262.97,350.23 1267.91,325.97 1272.85,335.85 1277.79,338.85 1282.74,351.28 1287.68,323.27 1292.62,329.04 1297.56,310.09 1302.50,343.87 1307.45,340.42 1312.39,351.28 1317.33,335.10 1322.27,334.80 1327.21,345.74 1332.16,338.85 1337.10,335.10 1342.04,331.58 1346.98,341.62 1351.93,329.34 1356.87,326.26 1361.81,328.74 1366.75,345.74 1371.69,329.34 1376.64,324.47 1381.58,333.61 1386.52,354.80 1391.46,332.48 1396.40,330.98 1401.35,335.10 1406.29,357.87 1411.23,334.35 1416.17,326.41 1421.12,329.04 1426.06,344.17 1431.00,305.22 L1431.0,469 Z" fill="rgba(242,73,92,0.2)"/><polyline points="12.60,389.26 17.54,385.89 22.48,385.89 27.43,394.12 32.37,387.38 37.31,375.40 42.25,375.40 47.20,382.14 52.14,376.15 57.08,372.40 62.02,378.40 66.96,386.63 71.91,374.65 76.85,374.65 81.79,378.40 86.73,381.39 91.67,375.40 96.62,375.40 101.56,378.40 106.50,393.38 111.44,379.52 116.39,373.15 121.33,378.40 126.27,387.38 131.21,371.65 136.15,376.90 141.10,385.89 146.04,380.27 150.98,399.37 155.92,377.27 160.86,389.26 165.81,388.51 170.75,383.26 175.69,390.38 180.63,400.87 185.58,379.52 190.52,380.27 195.46,380.27 200.40,386.63 205.34,371.20 210.29,375.25 215.23,376.30 220.17,388.43 225.11,377.57 230.06,361.32 235.00,375.25 239.94,376.45 244.88,360.57 249.82,361.32 254.77,385.14 259.71,361.92 264.65,364.39 269.59,366.41 274.53,376.00 279.48,357.42 284.42,363.57 289.36,354.05 294.30,372.55 299.25,364.39 304.19,360.87 309.13,370.46 314.07,367.68 319.01,362.37 323.96,362.82 328.90,378.77 333.84,361.32 338.78,358.17 343.72,361.92 348.67,374.95 353.61,362.37 358.55,350.98 363.49,366.94 368.44,373.00 373.38,363.86 378.32,368.73 383.26,382.07 388.20,382.07 393.15,364.69 398.09,363.42 403.03,384.69 407.97,377.27 412.91,382.89 417.86,376.00 422.80,392.70 427.74,373.30 432.68,377.12 437.63,361.92 442.57,386.63 447.51,374.50 452.45,379.82 457.39,366.94 462.34,393.45 467.28,375.25 472.22,377.12 477.16,369.48 482.11,376.45 487.05,363.57 491.99,367.39 496.93,358.92 501.87,405.36 506.82,402.59 511.76,369.18 516.70,363.42 521.64,370.76 526.58,377.87 531.53,368.88 536.47,371.06 541.41,370.76 546.35,391.65 551.30,384.09 556.24,389.71 561.18,386.63 566.12,386.93 571.06,409.40 576.01,385.14 580.95,389.71 585.89,394.95 590.83,396.07 595.77,418.47 600.72,393.90 605.66,387.38 610.60,397.27 615.54,392.70 620.49,446.55 625.43,457.94 630.37,465.50 635.31,468.50 640.25,465.50 645.20,456.37 650.14,461.68 655.08,466.55 660.02,454.87 664.97,441.24 669.91,408.95 674.85,400.27 679.79,388.88 684.73,384.09 689.68,384.09 694.62,395.47 699.56,388.58 704.50,376.82 709.44,384.39 714.39,397.72 719.33,391.65 724.27,387.38 729.21,402.29 734.16,397.27 739.10,410.60 744.04,404.84 748.98,404.09 753.92,397.27 758.87,422.29 763.81,392.70 768.75,388.88 773.69,376.82 778.63,333.16 783.58,325.97 788.52,304.32 793.46,299.75 798.40,378.32 803.35,342.22 808.29,305.82 813.23,302.52 818.17,310.39 823.11,312.63 828.06,310.09 833.00,306.72 837.94,314.66 842.88,314.96 847.83,315.10 852.77,316.15 857.71,325.22 862.65,345.74 867.59,334.35 872.54,329.34 877.48,351.81 882.42,333.61 887.36,329.34 892.30,333.61 897.25,349.18 902.19,351.28 907.13,352.55 912.07,340.72 917.02,344.62 921.96,348.44 926.90,334.35 931.84,342.97 936.78,335.40 941.73,353.75 946.67,356.00 951.61,346.49 956.55,344.47 961.49,354.05 966.44,332.48 971.38,339.37 976.32,342.67 981.26,376.00 986.21,351.81 991.15,357.35 996.09,363.12 1001.03,395.32 1005.97,384.09 1010.92,379.82 1015.86,381.77 1020.80,375.70 1025.74,359.07 1030.69,359.67 1035.63,361.62 1040.57,371.50 1045.51,362.67 1050.45,362.37 1055.40,369.18 1060.34,376.00 1065.28,354.35 1070.22,354.80 1075.16,354.80 1080.11,362.07 1085.05,355.25 1089.99,354.05 1094.93,349.18 1099.88,369.93 1104.82,354.05 1109.76,345.44 1114.70,350.98 1119.64,364.69 1124.59,350.68 1129.53,347.54 1134.47,333.16 1139.41,363.57 1144.35,352.55 1149.30,341.17 1154.24,347.24 1159.18,368.88 1164.12,350.98 1169.07,350.23 1174.01,345.44 1178.95,340.87 1183.89,355.55 1188.83,334.35 1193.78,334.35 1198.72,331.58 1203.66,355.25 1208.60,338.85 1213.54,341.92 1218.49,337.80 1223.43,349.03 1228.37,321.92 1233.31,332.03 1238.26,332.48 1243.20,339.67 1248.14,327.54 1253.08,328.29 1258.02,322.97 1262.97,350.23 1267.91,325.97 1272.85,335.85 1277.79,338.85 1282.74,351.28 1287.68,323.27 1292.62,329.04 1297.56,310.09 1302.50,343.87 1307.45,340.42 1312.39,351.28 1317.33,335.10 1322.27,334.80 1327.21,345.74 1332.16,338.85 1337.10,335.10 1342.04,331.58 1346.98,341.62 1351.93,329.34 1356.87,326.26 1361.81,328.74 1366.75,345.74 1371.69,329.34 1376.64,324.47 1381.58,333.61 1386.52,354.80 1391.46,332.48 1396.40,330.98 1401.35,335.10 1406.29,357.87 1411.23,334.35 1416.17,326.41 1421.12,329.04 1426.06,344.17 1431.00,305.22" fill="none" stroke="#f2495c" stroke-width="1"/></svg>
<div class="t" style="left:21.00px;top:526.52px;font-size:36px;color:#ccccdc;-webkit-text-stroke:0.35px #ccccdc;">infra</div>
<div class="a" style="left:21px;top:569px;width:1249px;height:144px;background:#232429;"></div>
<div class="a" style="left:21px;top:569px;width:1px;height:144px;background:#652ca8;"></div>
<div class="t" style="left:21.00px;top:730.02px;font-size:36px;color:#ccccdc;-webkit-text-stroke:0.35px #ccccdc;">application</div>
<div class="a" style="left:21px;top:773px;width:1252px;height:143px;background:#652ca8;border-radius:2px;"></div>
<svg class="a" style="left:0;top:0" width="2876" height="1414"><g transform="translate(1289.818,244.177) scale(0.33054,0.3366)"><g transform="translate(30.000,1040.000) scale(0.20504)"><path d="M60,272 L345,88 L513,88 L513,1228 L340,1228 L340,260 L60,438 Z" fill="#652ca8" fill-rule="evenodd"/></g><g transform="translate(160.000,1040.000) scale(0.20521)"><path d="M188,418 C188,230 340,72 555,72 C760,72 920,200 920,400 C920,530 860,630 760,735 L430,1078 L940,1078 L940,1228 L188,1228 L188,1100 L600,680 C700,575 757,500 757,400 C757,290 670,215 553,215 C430,215 352,300 352,418 Z" fill="#652ca8" fill-rule="evenodd"/></g></g><g transform="translate(1052.825,449.024) scale(0.32976,0.3358)"><g transform="translate(740.000,1040.000) scale(0.20504)"><path d="M60,272 L345,88 L513,88 L513,1228 L340,1228 L340,260 L60,438 Z" fill="#652ca8" fill-rule="evenodd"/></g><g transform="translate(880.000,1040.000) scale(0.20521)"><path d="M162,383 C170,195 340,72 540,72 C750,72 900,200 900,390 C900,510 830,605 705,638 C850,665 942,770 942,910 C942,1110 770,1243 540,1243 C310,1243 140,1110 137,930 L312,930 C318,1030 410,1095 540,1095 C680,1095 768,1020 768,905 C768,785 680,715 530,715 L423,715 L423,573 L520,573 C650,573 733,500 733,390 C733,285 655,215 538,215 C420,215 333,285 327,383 Z" fill="#652ca8" fill-rule="evenodd"/></g></g></svg>
<div class="a" style="left:12px;top:934px;width:708px;height:446px;background:linear-gradient(120deg,#b15b00 0%,#c64a00 50%,#e03a00 100%);border-radius:2px;"></div>
<div class="a" style="left:723px;top:934px;width:707px;height:446px;background:linear-gradient(120deg,#b15b00 0%,#c64a00 50%,#e03a00 100%);border-radius:2px;"></div>
<div class="t" style="left:24.50px;top:948.31px;font-size:32px;color:#ffffff;-webkit-text-stroke:0.3px #ffffff;">open count</div>
<div class="t" style="left:734.50px;top:948.31px;font-size:32px;color:#ffffff;-webkit-text-stroke:0.3px #ffffff;">closed count</div>
<svg class="a" style="left:0;top:0" width="2876" height="1414"><g transform="translate(30.000,1040.000) scale(0.20504)"><path d="M60,272 L345,88 L513,88 L513,1228 L340,1228 L340,260 L60,438 Z" fill="#f7f8fa" fill-rule="evenodd"/></g><g transform="translate(160.000,1040.000) scale(0.20521)"><path d="M188,418 C188,230 340,72 555,72 C760,72 920,200 920,400 C920,530 860,630 760,735 L430,1078 L940,1078 L940,1228 L188,1228 L188,1100 L600,680 C700,575 757,500 757,400 C757,290 670,215 553,215 C430,215 352,300 352,418 Z" fill="#f7f8fa" fill-rule="evenodd"/></g><g transform="translate(740.000,1040.000) scale(0.20504)"><path d="M60,272 L345,88 L513,88 L513,1228 L340,1228 L340,260 L60,438 Z" fill="#f7f8fa" fill-rule="evenodd"/></g><g transform="translate(880.000,1040.000) scale(0.20521)"><path d="M162,383 C170,195 340,72 540,72 C750,72 900,200 900,390 C900,510 830,605 705,638 C850,665 942,770 942,910 C942,1110 770,1243 540,1243 C310,1243 140,1110 137,930 L312,930 C318,1030 410,1095 540,1095 C680,1095 768,1020 768,905 C768,785 680,715 530,715 L423,715 L423,573 L520,573 C650,573 733,500 733,390 C733,285 655,215 538,215 C420,215 333,285 327,383 Z" fill="#f7f8fa" fill-rule="evenodd"/></g></svg>
</body></html>
